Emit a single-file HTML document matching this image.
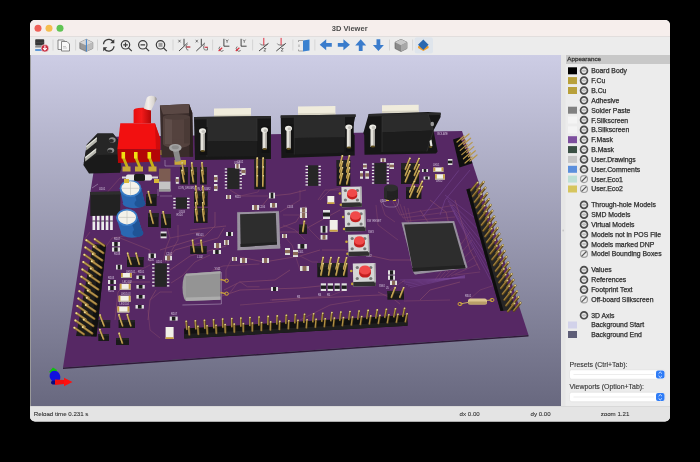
<!DOCTYPE html>
<html><head><meta charset="utf-8">
<style>
html,body{margin:0;padding:0;background:#000;width:700px;height:462px;overflow:hidden}
svg{display:block;will-change:transform}
text{font-family:"Liberation Sans",sans-serif}
.pt{font-size:6.85px;fill:#2e2e2e;stroke:#2e2e2e;stroke-width:0.25px}
.st{font-size:6.15px;fill:#333;stroke:#333;stroke-width:0.1px}
.pl{font-size:6.95px;fill:#333;stroke:#333;stroke-width:0.12px}
</style></head><body>
<svg width="700" height="462" viewBox="0 0 700 462">
<defs>
<linearGradient id="bg" x1="0" y1="0" x2="0" y2="1">
<stop offset="0" stop-color="#cdcde5"/>
<stop offset="1" stop-color="#68687f"/>
</linearGradient>
<clipPath id="win"><rect x="30" y="20" width="640" height="401.5" rx="5"/></clipPath>
<clipPath id="vp"><rect x="31" y="55" width="530" height="351"/></clipPath>
<g id="eye">
<circle r="3.45" fill="#e8e8e8" stroke="#4c4c4c" stroke-width="1.7"/>
<path d="M-2.5,0 Q0,-2.3 2.5,0 Q0,2.3 -2.5,0Z" fill="#bdbdbd"/>
</g>
<g id="off">
<circle r="3.5" fill="#ececec" stroke="#a0a0a0" stroke-width="1.2"/>
<path d="M-2.4,2.4 L2.4,-2.4" stroke="#555" stroke-width="1.2"/>
</g>
</defs>
<rect width="700" height="462" fill="#000"/>
<g clip-path="url(#win)">
<rect x="30" y="20" width="640" height="402" fill="#ececec"/>
<rect x="30" y="20" width="640" height="16" fill="#f6eeec"/>
<rect x="30" y="36" width="640" height="19" fill="#ececec"/>
<rect x="30" y="36" width="640" height="0.6" fill="#dcd6d4"/>
<rect x="31" y="55" width="530" height="351" fill="url(#bg)"/>
<rect x="30" y="55" width="1" height="351" fill="#9a9a9a"/>
<rect x="561" y="55" width="4.5" height="351" fill="#e6e6e6"/><circle cx="563.2" cy="230.5" r="0.9" fill="#c8c8c8"/>
<rect x="566" y="55" width="104" height="9" fill="#c8c8c8"/>
<rect x="30" y="406" width="640" height="16" fill="#e4e4e4"/>
<rect x="30" y="406" width="640" height="0.6" fill="#d0d0d0"/>
</g>
<g clip-path="url(#vp)">
<polygon points="99.0,137.0 462.0,131.0 528.5,335.0 63.0,367.5" fill="#562864" />
<polygon points="63.0,367.5 528.5,335.0 528.5,336.5 63.0,369.0" fill="#2e1a38" />
<polygon points="97.5,133.4 113.0,133.4 117.9,139.7 121.4,167.9 120.0,172.8 89.0,173.5 83.4,165.0 86.9,144.6" fill="#1a1a1a" />
<polygon points="97.5,133.4 113.0,133.4 117.9,139.7 119.0,154.5 97.0,155.0 95.5,140.0" fill="#262626" />
<polygon points="86.9,144.6 97.5,133.4 95.5,140.0 97.0,155.0 83.8,163.0" fill="#222222" />
<polygon points="86.2,146.0 96.8,137.3 96.8,141.8 86.2,150.5" fill="#b8b8b0" />
<polygon points="85.2,157.0 96.2,148.2 96.2,152.7 85.2,161.5" fill="#b8b8b0" />
<polygon points="86.2,146.0 96.8,137.3 96.8,138.8 86.2,147.5" fill="#e4e4dc" />
<polygon points="85.2,157.0 96.2,148.2 96.2,149.7 85.2,158.5" fill="#e4e4dc" />
<ellipse cx="112.3" cy="139.9" rx="3.4" ry="2.6" fill="#8e8e8e" />
<ellipse cx="110.8" cy="150.3" rx="3.4" ry="2.6" fill="#8e8e8e" />
<ellipse cx="111.3" cy="140.8" rx="2.6" ry="1.7" fill="#2a2a2a" />
<ellipse cx="109.8" cy="151.2" rx="2.6" ry="1.7" fill="#2a2a2a" />
<rect x="174.5" y="160.0" width="11.5" height="4.8" fill="#c8a838" />
<rect x="160.5" y="150.0" width="6.0" height="5.0" fill="#c8a838" />
<polygon points="159.9,105.6 189.0,103.9 192.3,112.9 193.1,156.7 161.5,157.5" fill="#3a2c2a" />
<polygon points="159.9,105.6 189.0,103.9 192.3,112.9 163.0,114.5" fill="#5a4844" />
<polygon points="189.0,103.9 192.3,112.9 193.1,156.7 189.5,156.8" fill="#2a201e" />
<rect x="163.0" y="117.0" width="27.0" height="26.5" fill="#54423e" />
<ellipse cx="176.5" cy="143.5" rx="13.5" ry="4.5" fill="#54423e" />
<rect x="165.0" y="117.0" width="7.0" height="27.0" fill="#5f4d49" />
<rect x="184.0" y="117.0" width="6.0" height="26.5" fill="#4a3a36" />
<ellipse cx="176.5" cy="117.0" rx="13.5" ry="2.8" fill="#4e3e3a" />
<polygon points="172.8,150.0 178.5,149.0 181.0,161.0 175.5,162.0" fill="#8a8a8a" />
<ellipse cx="175.3" cy="147.8" rx="6.3" ry="3.9" fill="#a4a4a4" />
<ellipse cx="175.3" cy="147.2" rx="3.6" ry="2.0" fill="#8c8c8c" />
<polygon points="120.3,123.3 154.9,123.3 160.2,138.5 160.2,149.5 117.4,149.0" fill="#f21010" />
<polygon points="154.9,123.3 160.2,138.5 160.2,149.5 156.0,149.4" fill="#d00c0c" />
<polygon points="117.4,149.0 160.2,149.5 160.2,161.4 118.0,163.0" fill="#b40606" />
<polygon points="122.0,158.0 125.0,158.0 130.0,170.0 127.0,170.0" fill="#c8b010" />
<rect x="121.5" y="152.0" width="3.6" height="6.5" fill="#f2e010" />
<rect x="122.5" y="166.5" width="8.0" height="5.0" fill="#c8a838" />
<polygon points="134.5,158.0 137.5,158.0 142.5,170.0 139.5,170.0" fill="#c8b010" />
<rect x="134.0" y="152.0" width="3.6" height="6.5" fill="#f2e010" />
<rect x="135.0" y="166.5" width="8.0" height="5.0" fill="#c8a838" />
<polygon points="148.0,158.0 151.0,158.0 156.0,170.0 153.0,170.0" fill="#c8b010" />
<rect x="147.5" y="152.0" width="3.6" height="6.5" fill="#f2e010" />
<rect x="148.5" y="166.5" width="8.0" height="5.0" fill="#c8a838" />
<linearGradient id="bush" x1="0" x2="1" y1="0" y2="0"><stop offset="0" stop-color="#e80c0c"/><stop offset="0.45" stop-color="#f41a1a"/><stop offset="1" stop-color="#b00808"/></linearGradient>
<linearGradient id="lev" x1="0" x2="1" y1="0" y2="0"><stop offset="0" stop-color="#ddd8d4"/><stop offset="0.35" stop-color="#f4f0ec"/><stop offset="0.8" stop-color="#d8d4d0"/><stop offset="1" stop-color="#8a8682"/></linearGradient>
<path d="M133.6,123.3 V110.5 Q133.6,107.8 142.3,107.8 Q151,107.8 151,110.5 V123.3 Z" fill="url(#bush)"/>
<path d="M146.2,99.5 Q147,95.6 151.8,95.8 Q156.8,96.4 156.6,99.5 L151.2,110.2 Q147.5,110.5 143.8,108.6 Z" fill="url(#lev)" transform="rotate(0)"/>
<polygon points="214.0,108.6 251.0,108.1 251.0,116.5 214.0,117.0" fill="#f0ecdc" />
<polygon points="214.0,115.0 251.0,114.5 251.0,116.5 214.0,117.0" fill="#d8d4c4" />
<polygon points="194.0,117.0 271.0,116.0 271.0,159.0 195.0,160.0" fill="#171717" />
<polygon points="194.0,117.0 271.0,116.0 271.0,118.5 194.0,119.5" fill="#2a2a2a" />
<polygon points="207.0,118.3 257.0,117.7 257.0,141.0 207.0,141.5" fill="#2b2b2b" />
<polygon points="207.0,141.5 257.0,141.0 257.0,156.2 208.0,156.8" fill="#1d1d1d" />
<path d="M207.0,118.8 V156.8 M257.0,118.2 L257.0,141.0" stroke="#383838" stroke-width="0.6"/>
<rect x="199.9" y="127.0" width="7.5" height="28.0" fill="#121212" />
<rect x="200.5" y="131.0" width="4.2" height="20.0" fill="#e4e2da" />
<rect x="203.3" y="131.0" width="1.4" height="20.0" fill="#a8a6a0" />
<ellipse cx="202.5" cy="131.0" rx="3.5" ry="2.7" fill="#ecebe4" />
<ellipse cx="203.3" cy="131.4" rx="1.8" ry="1.5" fill="#c4c2bc" />
<ellipse cx="202.7" cy="151.0" rx="2.3" ry="1.1" fill="#5c4c1c" />
<rect x="261.9" y="126.0" width="7.5" height="27.0" fill="#121212" />
<rect x="262.5" y="130.0" width="4.2" height="19.0" fill="#e4e2da" />
<rect x="265.3" y="130.0" width="1.4" height="19.0" fill="#a8a6a0" />
<ellipse cx="264.5" cy="130.0" rx="3.5" ry="2.7" fill="#ecebe4" />
<ellipse cx="265.3" cy="130.4" rx="1.8" ry="1.5" fill="#c4c2bc" />
<ellipse cx="264.7" cy="149.0" rx="2.3" ry="1.1" fill="#5c4c1c" />
<polygon points="298.0,106.6 335.4,106.1 335.4,114.8 298.0,115.3" fill="#f0ecdc" />
<polygon points="298.0,113.3 335.4,112.8 335.4,114.8 298.0,115.3" fill="#d8d4c4" />
<polygon points="280.7,115.6 355.7,114.5 351.8,133.0 354.7,135.0 354.7,155.4 281.4,158.0" fill="#171717" />
<polygon points="280.7,115.6 355.7,114.5 355.7,117.0 280.7,118.1" fill="#2a2a2a" />
<polygon points="294.3,116.9 344.4,116.2 344.4,137.4 294.3,137.9" fill="#2b2b2b" />
<polygon points="294.3,137.9 344.4,137.4 344.4,152.8 295.3,154.5" fill="#1d1d1d" />
<path d="M294.3,117.4 V154.5 M344.4,116.7 L344.4,137.4" stroke="#383838" stroke-width="0.6"/>
<rect x="285.9" y="124.4" width="7.5" height="28.4" fill="#121212" />
<rect x="286.5" y="128.4" width="4.2" height="20.4" fill="#e4e2da" />
<rect x="289.3" y="128.4" width="1.4" height="20.4" fill="#a8a6a0" />
<ellipse cx="288.5" cy="128.4" rx="3.5" ry="2.7" fill="#ecebe4" />
<ellipse cx="289.3" cy="128.8" rx="1.8" ry="1.5" fill="#c4c2bc" />
<ellipse cx="288.7" cy="148.8" rx="2.3" ry="1.1" fill="#5c4c1c" />
<rect x="346.2" y="123.1" width="7.5" height="28.4" fill="#121212" />
<rect x="346.8" y="127.1" width="4.2" height="20.4" fill="#e4e2da" />
<rect x="349.6" y="127.1" width="1.4" height="20.4" fill="#a8a6a0" />
<ellipse cx="348.8" cy="127.1" rx="3.5" ry="2.7" fill="#ecebe4" />
<ellipse cx="349.6" cy="127.5" rx="1.8" ry="1.5" fill="#c4c2bc" />
<ellipse cx="349.0" cy="147.5" rx="2.3" ry="1.1" fill="#5c4c1c" />
<polygon points="382.0,105.3 418.7,104.8 418.7,112.6 382.0,113.1" fill="#f0ecdc" />
<polygon points="382.0,111.0 418.7,110.5 418.7,112.6 382.0,113.1" fill="#d8d4c4" />
<polygon points="368.7,114.0 428.0,112.0 440.6,112.7 440.6,117.0 433.5,130.6 437.6,151.4 436.0,153.4 364.5,154.8 364.2,135.0 363.3,133.0" fill="#161616" />
<polygon points="368.7,114.0 440.6,112.7 440.6,115.0 368.7,116.5" fill="#2a2a2a" />
<polygon points="382.0,116.0 428.0,114.0 433.5,130.6 382.0,132.6" fill="#2b2b2b" />
<polygon points="382.0,132.6 433.5,130.6 426.9,151.4 382.0,152.0" fill="#1c1c1c" />
<path d="M382,116.5 V152 M428,114 L433.5,130.6 L426.9,151.4" stroke="#3a3a3a" stroke-width="0.6" fill="none"/>
<rect x="370.5" y="127.0" width="4.2" height="20.0" fill="#e4e2da" />
<rect x="373.3" y="127.0" width="1.4" height="20.0" fill="#a8a6a0" />
<ellipse cx="372.7" cy="127.1" rx="3.5" ry="2.7" fill="#ecebe4" />
<ellipse cx="373.5" cy="127.5" rx="1.8" ry="1.5" fill="#c4c2bc" />
<ellipse cx="372.9" cy="146.5" rx="2.3" ry="1.1" fill="#5c4c1c" />
<ellipse cx="432.3" cy="124.0" rx="1.8" ry="2.2" fill="#9a9a9a" />
<polygon points="429.5,141.0 431.5,139.5 432.5,146.0 430.5,147.0" fill="#e8e8e0" />
<ellipse cx="430.7" cy="147.0" rx="1.5" ry="0.9" fill="#6a5a20" />
<path d="M160,250 L205,236 L215,226 L215,212" stroke="#82486a" stroke-width="0.7" fill="none" opacity="1"/>
<path d="M165,262 L175,250 L218,238 L224,228" stroke="#82486a" stroke-width="0.7" fill="none" opacity="1"/>
<path d="M170,270 L190,256 L226,246" stroke="#82486a" stroke-width="0.7" fill="none" opacity="1"/>
<path d="M148,320 L150,300 L156,290" stroke="#82486a" stroke-width="0.7" fill="none" opacity="1"/>
<path d="M115,320 L118,292 L128,282 L150,282" stroke="#82486a" stroke-width="0.7" fill="none" opacity="1"/>
<path d="M224,290 L240,282 L275,280 L290,270" stroke="#82486a" stroke-width="0.7" fill="none" opacity="1"/>
<path d="M222,296 L240,290 L300,288 L320,286" stroke="#82486a" stroke-width="0.7" fill="none" opacity="1"/>
<path d="M240,257 L264,262 L300,256 L320,250" stroke="#82486a" stroke-width="0.7" fill="none" opacity="1"/>
<path d="M280,232 L300,232 L318,222 L340,210" stroke="#82486a" stroke-width="0.7" fill="none" opacity="1"/>
<path d="M280,228 L296,222 L306,206" stroke="#82486a" stroke-width="0.7" fill="none" opacity="1"/>
<path d="M262,206 L270,196 L290,194 L306,190" stroke="#82486a" stroke-width="0.7" fill="none" opacity="1"/>
<path d="M190,230 L226,226" stroke="#82486a" stroke-width="0.7" fill="none" opacity="1"/>
<path d="M322,250 L345,250 L390,260 L420,260" stroke="#82486a" stroke-width="0.7" fill="none" opacity="1"/>
<path d="M378,292 L395,300 L400,304" stroke="#82486a" stroke-width="0.7" fill="none" opacity="1"/>
<path d="M272,300 L380,295 L390,295" stroke="#82486a" stroke-width="0.7" fill="none" opacity="1"/>
<path d="M420,300 L430,290 L460,282" stroke="#82486a" stroke-width="0.7" fill="none" opacity="1"/>
<path d="M455,200 L470,250 L480,270" stroke="#82486a" stroke-width="0.7" fill="none" opacity="1"/>
<path d="M430,200 L446,212 L455,250" stroke="#82486a" stroke-width="0.7" fill="none" opacity="1"/>
<path d="M420,210 L440,240 L448,272" stroke="#82486a" stroke-width="0.7" fill="none" opacity="1"/>
<path d="M435,280 L470,232" stroke="#82486a" stroke-width="0.5" fill="none" opacity="1"/>
<path d="M439,279 L472,240" stroke="#82486a" stroke-width="0.5" fill="none" opacity="1"/>
<path d="M443,278 L474,248" stroke="#82486a" stroke-width="0.5" fill="none" opacity="1"/>
<path d="M447,277 L476,256" stroke="#82486a" stroke-width="0.5" fill="none" opacity="1"/>
<path d="M451,276 L478,264" stroke="#82486a" stroke-width="0.5" fill="none" opacity="1"/>
<path d="M455,275 L480,272" stroke="#82486a" stroke-width="0.5" fill="none" opacity="1"/>
<path d="M392,200 L400,215 L455,205" stroke="#82486a" stroke-width="0.5" fill="none" opacity="1"/>
<path d="M396,202 L403,218 L455,211" stroke="#82486a" stroke-width="0.5" fill="none" opacity="1"/>
<path d="M400,204 L406,221 L455,217" stroke="#82486a" stroke-width="0.5" fill="none" opacity="1"/>
<path d="M404,206 L409,224 L455,223" stroke="#82486a" stroke-width="0.5" fill="none" opacity="1"/>
<path d="M408,208 L412,227 L455,229" stroke="#82486a" stroke-width="0.5" fill="none" opacity="1"/>
<path d="M104,196 L120,178 L160,176" stroke="#82486a" stroke-width="0.6" fill="none" opacity="1"/>
<path d="M90,232 L84,240" stroke="#82486a" stroke-width="0.6" fill="none" opacity="1"/>
<path d="M120,238 L150,250 L150,262" stroke="#82486a" stroke-width="0.6" fill="none" opacity="1"/>
<path d="M165,220 L170,238 L200,232" stroke="#82486a" stroke-width="0.6" fill="none" opacity="1"/>
<path d="M230,190 L240,196 L268,196" stroke="#82486a" stroke-width="0.6" fill="none" opacity="1"/>
<path d="M340,190 L325,190 L318,200" stroke="#82486a" stroke-width="0.6" fill="none" opacity="1"/>
<path d="M300,320 L330,305 L360,300" stroke="#82486a" stroke-width="0.6" fill="none" opacity="1"/>
<path d="M240,305 L300,300" stroke="#82486a" stroke-width="0.6" fill="none" opacity="1"/>
<path d="M167.7,262.5 L172,250 L178,240 L178,225" stroke="#82486a" stroke-width="0.6" fill="none" opacity="1"/>
<path d="M163,262 L166,248 L170,238" stroke="#82486a" stroke-width="0.6" fill="none" opacity="1"/>
<path d="M171,283 L182,276 L195,262 L210,255" stroke="#82486a" stroke-width="0.6" fill="none" opacity="1"/>
<path d="M212.7,270.3 L223,266 L259.5,264" stroke="#82486a" stroke-width="0.6" fill="none" opacity="1"/>
<path d="M239.6,281.6 L247.4,286.8 L259.5,286.8" stroke="#82486a" stroke-width="0.6" fill="none" opacity="1"/>
<path d="M230,292.8 L237,283.3" stroke="#82486a" stroke-width="0.6" fill="none" opacity="1"/>
<path d="M150,300 L160,292 L172,292" stroke="#82486a" stroke-width="0.6" fill="none" opacity="1"/>
<path d="M128,278 L140,270 L150,265" stroke="#82486a" stroke-width="0.5" fill="none" opacity="1"/>
<path d="M148,310 L150,330 L160,338" stroke="#82486a" stroke-width="0.5" fill="none" opacity="1"/>
<path d="M105,248 L112,238 L125,236" stroke="#82486a" stroke-width="0.5" fill="none" opacity="1"/>
<path d="M240,196 L258,192 L264,180" stroke="#82486a" stroke-width="0.5" fill="none" opacity="1"/>
<path d="M300,190 L300,200 L290,206 L280,212" stroke="#82486a" stroke-width="0.5" fill="none" opacity="1"/>
<path d="M320,200 L330,190 L340,188" stroke="#82486a" stroke-width="0.5" fill="none" opacity="1"/>
<path d="M283,215 L300,215 L310,230 L320,240" stroke="#82486a" stroke-width="0.5" fill="none" opacity="1"/>
<path d="M283,225 L295,230 L305,240" stroke="#82486a" stroke-width="0.5" fill="none" opacity="1"/>
<path d="M283,235 L292,245 L300,270" stroke="#82486a" stroke-width="0.5" fill="none" opacity="1"/>
<path d="M232,258 L226,270 L226,280" stroke="#82486a" stroke-width="0.5" fill="none" opacity="1"/>
<path d="M270,300 L330,296 L345,290" stroke="#82486a" stroke-width="0.5" fill="none" opacity="1"/>
<path d="M404,301 L450,300" stroke="#82486a" stroke-width="0.5" fill="none" opacity="1"/>
<path d="M445.0,195 L475.0,218" stroke="#7a4a9a" stroke-width="0.45" fill="none" opacity="1"/>
<path d="M446.5,198 L478.5,230" stroke="#7a4a9a" stroke-width="0.45" fill="none" opacity="1"/>
<path d="M448.0,201 L482.0,242" stroke="#7a4a9a" stroke-width="0.45" fill="none" opacity="1"/>
<path d="M449.5,204 L485.5,254" stroke="#7a4a9a" stroke-width="0.45" fill="none" opacity="1"/>
<path d="M451.0,207 L489.0,266" stroke="#7a4a9a" stroke-width="0.45" fill="none" opacity="1"/>
<path d="M452.5,210 L492.5,278" stroke="#7a4a9a" stroke-width="0.45" fill="none" opacity="1"/>
<path d="M454.0,213 L496.0,290" stroke="#7a4a9a" stroke-width="0.45" fill="none" opacity="1"/>
<path d="M400,280.0 L465,278.0" stroke="#7a4a9a" stroke-width="0.45" fill="none" opacity="1"/>
<path d="M402,281.5 L465,277.5" stroke="#7a4a9a" stroke-width="0.45" fill="none" opacity="1"/>
<path d="M404,283.0 L465,277.0" stroke="#7a4a9a" stroke-width="0.45" fill="none" opacity="1"/>
<path d="M406,284.5 L465,276.5" stroke="#7a4a9a" stroke-width="0.45" fill="none" opacity="1"/>
<path d="M408,286.0 L465,276.0" stroke="#7a4a9a" stroke-width="0.45" fill="none" opacity="1"/>
<path d="M410,287.5 L465,275.5" stroke="#7a4a9a" stroke-width="0.45" fill="none" opacity="1"/>
<path d="M458.8,170.4 L422.5,217" stroke="#7a4a9a" stroke-width="0.5" fill="none" opacity="1"/>
<path d="M470,170 L445,200 L440,215" stroke="#7a4a9a" stroke-width="0.5" fill="none" opacity="1"/>
<path d="M380,200 L385,215 L395,222" stroke="#82486a" stroke-width="0.5" fill="none" opacity="1"/>
<path d="M376,205 L378,225 L398,240" stroke="#82486a" stroke-width="0.5" fill="none" opacity="1"/>
<path d="M300,256 L312,262 L318,262" stroke="#82486a" stroke-width="0.5" fill="none" opacity="1"/>
<path d="M405,280 L390,290" stroke="#82486a" stroke-width="0.5" fill="none" opacity="1"/>
<path d="M470,299 L480,290 L495,285" stroke="#82486a" stroke-width="0.5" fill="none" opacity="1"/>
<text x="178.0" y="189.0" style="font-size:2.6px;fill:#e6dcef;opacity:0.85">CON_DRUM1</text>
<text x="194.0" y="189.5" style="font-size:2.6px;fill:#e6dcef;opacity:0.85">CON_DRUM2</text>
<text x="234.0" y="164.0" style="font-size:2.6px;fill:#e6dcef;opacity:0.85">U102</text>
<text x="235.0" y="197.5" style="font-size:2.6px;fill:#e6dcef;opacity:0.85">R111</text>
<text x="178.8" y="213.0" style="font-size:2.6px;fill:#e6dcef;opacity:0.85">U103</text>
<text x="176.5" y="216.0" style="font-size:2.6px;fill:#e6dcef;opacity:0.85">R104</text>
<text x="237.0" y="163.0" style="font-size:2.6px;fill:#e6dcef;opacity:0.85">C102</text>
<text x="287.0" y="208.0" style="font-size:2.6px;fill:#e6dcef;opacity:0.85">C103</text>
<text x="259.0" y="208.0" style="font-size:2.6px;fill:#e6dcef;opacity:0.85">C106</text>
<text x="300.0" y="213.0" style="font-size:2.6px;fill:#e6dcef;opacity:0.85">R109</text>
<text x="297.7" y="253.0" style="font-size:2.6px;fill:#e6dcef;opacity:0.85">L101</text>
<text x="367.0" y="222.0" style="font-size:2.6px;fill:#e6dcef;opacity:0.85">SW_RESET</text>
<text x="126.0" y="272.5" style="font-size:2.6px;fill:#e6dcef;opacity:0.85">LED101</text>
<text x="138.0" y="272.5" style="font-size:2.6px;fill:#e6dcef;opacity:0.85">R201</text>
<text x="122.4" y="283.0" style="font-size:2.6px;fill:#e6dcef;opacity:0.85">LED102</text>
<text x="121.0" y="294.5" style="font-size:2.6px;fill:#e6dcef;opacity:0.85">LED103</text>
<text x="119.5" y="305.0" style="font-size:2.6px;fill:#e6dcef;opacity:0.85">LED104</text>
<text x="156.0" y="262.5" style="font-size:2.6px;fill:#e6dcef;opacity:0.85">U201</text>
<text x="214.5" y="270.0" style="font-size:2.6px;fill:#e6dcef;opacity:0.85">Y101</text>
<text x="171.0" y="315.0" style="font-size:2.6px;fill:#e6dcef;opacity:0.85">R207</text>
<text x="197.0" y="258.0" style="font-size:2.6px;fill:#e6dcef;opacity:0.85">L102</text>
<text x="196.0" y="236.0" style="font-size:2.6px;fill:#e6dcef;opacity:0.85">FB101</text>
<text x="147.8" y="261.0" style="font-size:2.6px;fill:#e6dcef;opacity:0.85">R206</text>
<text x="166.0" y="255.0" style="font-size:2.6px;fill:#e6dcef;opacity:0.85">C202</text>
<text x="99.0" y="189.5" style="font-size:2.6px;fill:#e6dcef;opacity:0.85">U101</text>
<text x="108.0" y="279.0" style="font-size:2.6px;fill:#e6dcef;opacity:0.85">R203</text>
<text x="108.0" y="292.0" style="font-size:2.6px;fill:#e6dcef;opacity:0.85">R202</text>
<text x="114.0" y="239.5" style="font-size:2.6px;fill:#e6dcef;opacity:0.85">R107</text>
<text x="114.0" y="254.5" style="font-size:2.6px;fill:#e6dcef;opacity:0.85">R108</text>
<text x="366.0" y="257.0" style="font-size:2.6px;fill:#e6dcef;opacity:0.85">SW2</text>
<text x="368.0" y="233.0" style="font-size:2.6px;fill:#e6dcef;opacity:0.85">SW3</text>
<text x="379.0" y="287.0" style="font-size:2.6px;fill:#e6dcef;opacity:0.85">SW4</text>
<text x="380.0" y="202.0" style="font-size:2.6px;fill:#e6dcef;opacity:0.85">Q101</text>
<text x="433.0" y="165.5" style="font-size:2.6px;fill:#e6dcef;opacity:0.85">LED1</text>
<text x="436.0" y="182.0" style="font-size:2.6px;fill:#e6dcef;opacity:0.85">LED2</text>
<text x="465.0" y="297.0" style="font-size:2.6px;fill:#e6dcef;opacity:0.85">R301</text>
<text x="297.0" y="298.0" style="font-size:2.6px;fill:#e6dcef;opacity:0.85">R3</text>
<text x="318.0" y="296.0" style="font-size:2.6px;fill:#e6dcef;opacity:0.85">R4</text>
<text x="327.0" y="296.0" style="font-size:2.6px;fill:#e6dcef;opacity:0.85">R5</text>
<text x="386.0" y="289.0" style="font-size:2.6px;fill:#e6dcef;opacity:0.85">J5</text>
<text x="437.0" y="134.5" style="font-size:2.6px;fill:#e6dcef;opacity:0.85">ISOLATE</text>
<path d="M158,196 L158,189 M132,196 H125" stroke="#d8d0e0" stroke-width="0.4" fill="none" opacity="0.8"/>
<path d="M165,160 V166 H186" stroke="#d8d0e0" stroke-width="0.5" fill="none" opacity="0.8"/>
<path d="M160,196 L172,196" stroke="#d8d0e0" stroke-width="0.4" fill="none" opacity="0.8"/>
<polygon points="237.2,212.3 279.0,211.2 280.2,248.5 237.5,250.3" fill="#8c8494" />
<path d="M240.5,214.3 L237.7,212.3 M241.2,247.0 L238.0,250.3 M240.1,214.7 L237.2,212.8 M275.8,213.5 L279.0,211.7 M241.4,214.3 L238.8,212.3 M242.1,246.9 L239.1,250.2 M240.1,215.5 L237.2,213.7 M275.8,214.3 L279.0,212.6 M242.3,214.2 L239.8,212.2 M243.0,246.8 L240.2,250.2 M240.1,216.3 L237.2,214.7 M275.9,215.1 L279.1,213.5 M243.2,214.2 L240.9,212.2 M243.9,246.8 L241.2,250.1 M240.2,217.2 L237.2,215.6 M275.9,215.9 L279.1,214.5 M244.1,214.2 L241.9,212.2 M244.8,246.7 L242.3,250.1 M240.2,218.0 L237.2,216.6 M275.9,216.6 L279.1,215.4 M245.0,214.1 L242.9,212.1 M245.7,246.7 L243.4,250.1 M240.2,218.8 L237.2,217.5 M276.0,217.4 L279.2,216.3 M245.9,214.1 L244.0,212.1 M246.6,246.6 L244.4,250.0 M240.2,219.6 L237.2,218.5 M276.0,218.2 L279.2,217.3 M246.8,214.1 L245.0,212.1 M247.5,246.6 L245.5,250.0 M240.2,220.4 L237.3,219.4 M276.0,219.0 L279.2,218.2 M247.7,214.0 L246.1,212.1 M248.4,246.5 L246.6,249.9 M240.2,221.2 L237.3,220.4 M276.1,219.8 L279.3,219.1 M248.6,214.0 L247.1,212.0 M249.3,246.4 L247.6,249.9 M240.2,222.1 L237.3,221.3 M276.1,220.6 L279.3,220.1 M249.5,214.0 L248.2,212.0 M250.2,246.4 L248.7,249.8 M240.3,222.9 L237.3,222.3 M276.1,221.4 L279.3,221.0 M250.4,214.0 L249.2,212.0 M251.1,246.3 L249.8,249.8 M240.3,223.7 L237.3,223.2 M276.1,222.2 L279.3,221.9 M251.3,213.9 L250.3,212.0 M252.0,246.2 L250.8,249.7 M240.3,224.5 L237.3,224.2 M276.2,222.9 L279.4,222.9 M252.1,213.9 L251.3,211.9 M253.0,246.2 L251.9,249.7 M240.3,225.3 L237.3,225.1 M276.2,223.7 L279.4,223.8 M253.0,213.9 L252.4,211.9 M253.9,246.1 L253.0,249.6 M240.3,226.2 L237.3,226.1 M276.2,224.5 L279.4,224.7 M253.9,213.8 L253.4,211.9 M254.8,246.1 L254.0,249.6 M240.3,227.0 L237.3,227.0 M276.3,225.3 L279.5,225.7 M254.8,213.8 L254.4,211.8 M255.7,246.0 L255.1,249.6 M240.3,227.8 L237.3,228.0 M276.3,226.1 L279.5,226.6 M255.7,213.8 L255.5,211.8 M256.6,245.9 L256.2,249.5 M240.4,228.6 L237.3,228.9 M276.3,226.9 L279.5,227.5 M256.6,213.7 L256.5,211.8 M257.5,245.9 L257.2,249.5 M240.4,229.4 L237.3,229.9 M276.4,227.7 L279.6,228.5 M257.5,213.7 L257.6,211.8 M258.4,245.8 L258.3,249.4 M240.4,230.2 L237.3,230.8 M276.4,228.5 L279.6,229.4 M258.4,213.7 L258.6,211.7 M259.3,245.8 L259.4,249.4 M240.4,231.1 L237.4,231.8 M276.4,229.2 L279.6,230.3 M259.3,213.7 L259.7,211.7 M260.2,245.7 L260.5,249.3 M240.4,231.9 L237.4,232.7 M276.4,230.0 L279.6,231.2 M260.2,213.6 L260.7,211.7 M261.1,245.7 L261.5,249.3 M240.4,232.7 L237.4,233.7 M276.5,230.8 L279.7,232.2 M261.1,213.6 L261.8,211.7 M262.0,245.6 L262.6,249.2 M240.5,233.5 L237.4,234.6 M276.5,231.6 L279.7,233.1 M262.0,213.6 L262.8,211.6 M262.9,245.5 L263.7,249.2 M240.5,234.3 L237.4,235.6 M276.5,232.4 L279.7,234.0 M262.9,213.5 L263.8,211.6 M263.8,245.5 L264.7,249.2 M240.5,235.1 L237.4,236.5 M276.6,233.2 L279.8,235.0 M263.8,213.5 L264.9,211.6 M264.7,245.4 L265.8,249.1 M240.5,236.0 L237.4,237.5 M276.6,234.0 L279.8,235.9 M264.6,213.5 L265.9,211.5 M265.7,245.3 L266.9,249.1 M240.5,236.8 L237.4,238.4 M276.6,234.8 L279.8,236.8 M265.5,213.4 L267.0,211.5 M266.6,245.3 L267.9,249.0 M240.5,237.6 L237.4,239.4 M276.7,235.5 L279.9,237.8 M266.4,213.4 L268.0,211.5 M267.5,245.2 L269.0,249.0 M240.5,238.4 L237.4,240.3 M276.7,236.3 L279.9,238.7 M267.3,213.4 L269.1,211.5 M268.4,245.2 L270.1,248.9 M240.6,239.2 L237.4,241.3 M276.7,237.1 L279.9,239.6 M268.2,213.4 L270.1,211.4 M269.3,245.1 L271.1,248.9 M240.6,240.1 L237.4,242.2 M276.7,237.9 L279.9,240.6 M269.1,213.3 L271.2,211.4 M270.2,245.0 L272.2,248.8 M240.6,240.9 L237.4,243.2 M276.8,238.7 L280.0,241.5 M270.0,213.3 L272.2,211.4 M271.1,245.0 L273.3,248.8 M240.6,241.7 L237.5,244.1 M276.8,239.5 L280.0,242.4 M270.9,213.3 L273.3,211.4 M272.0,244.9 L274.3,248.7 M240.6,242.5 L237.5,245.1 M276.8,240.3 L280.0,243.4 M271.8,213.2 L274.3,211.3 M272.9,244.9 L275.4,248.7 M240.6,243.3 L237.5,246.0 M276.9,241.1 L280.1,244.3 M272.7,213.2 L275.3,211.3 M273.8,244.8 L276.5,248.7 M240.6,244.1 L237.5,247.0 M276.9,241.8 L280.1,245.2 M273.6,213.2 L276.4,211.3 M274.7,244.8 L277.5,248.6 M240.7,245.0 L237.5,247.9 M276.9,242.6 L280.1,246.2 M274.5,213.1 L277.4,211.2 M275.6,244.7 L278.6,248.6 M240.7,245.8 L237.5,248.9 M277.0,243.4 L280.2,247.1 M275.4,213.1 L278.5,211.2 M276.5,244.6 L279.7,248.5 M240.7,246.6 L237.5,249.8 M277.0,244.2 L280.2,248.0" stroke="#aaa6ae" stroke-width="0.45"/>
<polygon points="240.1,214.3 275.8,213.1 277.0,244.6 240.7,247.0" fill="#2d2d2d" />
<polygon points="240.5,244.0 277.0,242.0 277.0,244.6 240.7,247.0" fill="#222" />
<polygon points="401.5,222.5 454.0,221.0 467.5,267.5 414.8,274.5" fill="#8c8494" />
<path d="M404.6,224.4 L402.0,222.5 M413.7,271.4 L415.3,274.4 M404.2,224.9 L401.6,223.0 M452.7,223.4 L454.1,221.5 M405.6,224.4 L403.1,222.5 M414.8,271.3 L416.4,274.3 M404.4,225.9 L401.9,224.1 M453.0,224.3 L454.4,222.5 M406.6,224.3 L404.2,222.4 M415.9,271.2 L417.5,274.1 M404.6,226.8 L402.2,225.2 M453.3,225.3 L454.7,223.4 M407.6,224.3 L405.3,222.4 M417.0,271.2 L418.6,274.0 M404.8,227.8 L402.5,226.3 M453.5,226.2 L455.0,224.4 M408.6,224.3 L406.4,222.4 M418.1,271.1 L419.7,273.8 M405.0,228.8 L402.7,227.4 M453.8,227.2 L455.3,225.4 M409.7,224.2 L407.5,222.3 M419.2,271.0 L420.8,273.7 M405.1,229.8 L403.0,228.5 M454.1,228.1 L455.5,226.3 M410.7,224.2 L408.6,222.3 M420.3,271.0 L421.9,273.6 M405.3,230.8 L403.3,229.5 M454.3,229.0 L455.8,227.3 M411.7,224.2 L409.7,222.3 M421.4,270.9 L423.0,273.4 M405.5,231.7 L403.6,230.6 M454.6,230.0 L456.1,228.3 M412.7,224.1 L410.8,222.2 M422.5,270.9 L424.1,273.3 M405.7,232.7 L403.9,231.7 M454.9,230.9 L456.4,229.2 M413.7,224.1 L411.9,222.2 M423.6,270.8 L425.2,273.1 M405.9,233.7 L404.1,232.8 M455.2,231.9 L456.7,230.2 M414.7,224.1 L413.0,222.2 M424.6,270.7 L426.3,273.0 M406.1,234.7 L404.4,233.9 M455.4,232.8 L457.0,231.2 M415.7,224.0 L414.1,222.1 M425.7,270.7 L427.4,272.8 M406.3,235.7 L404.7,235.0 M455.7,233.8 L457.2,232.1 M416.7,224.0 L415.2,222.1 M426.8,270.6 L428.5,272.7 M406.5,236.6 L405.0,236.0 M456.0,234.7 L457.5,233.1 M417.7,224.0 L416.3,222.1 M427.9,270.5 L429.6,272.5 M406.7,237.6 L405.2,237.1 M456.2,235.7 L457.8,234.1 M418.8,223.9 L417.4,222.0 M429.0,270.5 L430.7,272.4 M406.8,238.6 L405.5,238.2 M456.5,236.6 L458.1,235.0 M419.8,223.9 L418.5,222.0 M430.1,270.4 L431.8,272.2 M407.0,239.6 L405.8,239.3 M456.8,237.6 L458.4,236.0 M420.8,223.9 L419.5,222.0 M431.2,270.3 L432.9,272.1 M407.2,240.6 L406.1,240.4 M457.0,238.5 L458.6,237.0 M421.8,223.9 L420.6,222.0 M432.3,270.3 L434.0,271.9 M407.4,241.5 L406.3,241.5 M457.3,239.5 L458.9,238.0 M422.8,223.8 L421.7,221.9 M433.4,270.2 L435.1,271.8 M407.6,242.5 L406.6,242.5 M457.6,240.4 L459.2,238.9 M423.8,223.8 L422.8,221.9 M434.4,270.1 L436.2,271.7 M407.8,243.5 L406.9,243.6 M457.8,241.3 L459.5,239.9 M424.8,223.8 L423.9,221.9 M435.5,270.1 L437.3,271.5 M408.0,244.5 L407.2,244.7 M458.1,242.3 L459.8,240.9 M425.8,223.7 L425.0,221.8 M436.6,270.0 L438.4,271.4 M408.2,245.5 L407.5,245.8 M458.4,243.2 L460.0,241.8 M426.8,223.7 L426.1,221.8 M437.7,269.9 L439.5,271.2 M408.4,246.4 L407.7,246.9 M458.6,244.2 L460.3,242.8 M427.8,223.7 L427.2,221.8 M438.8,269.9 L440.6,271.1 M408.6,247.4 L408.0,248.0 M458.9,245.1 L460.6,243.8 M428.9,223.6 L428.3,221.7 M439.9,269.8 L441.7,270.9 M408.7,248.4 L408.3,249.0 M459.2,246.1 L460.9,244.7 M429.9,223.6 L429.4,221.7 M441.0,269.8 L442.8,270.8 M408.9,249.4 L408.6,250.1 M459.5,247.0 L461.2,245.7 M430.9,223.6 L430.5,221.7 M442.1,269.7 L443.9,270.6 M409.1,250.3 L408.8,251.2 M459.7,248.0 L461.5,246.7 M431.9,223.5 L431.6,221.6 M443.2,269.6 L445.0,270.5 M409.3,251.3 L409.1,252.3 M460.0,248.9 L461.7,247.6 M432.9,223.5 L432.7,221.6 M444.3,269.6 L446.1,270.3 M409.5,252.3 L409.4,253.4 M460.3,249.9 L462.0,248.6 M433.9,223.5 L433.8,221.6 M445.3,269.5 L447.2,270.2 M409.7,253.3 L409.7,254.5 M460.5,250.8 L462.3,249.6 M434.9,223.4 L434.9,221.5 M446.4,269.4 L448.3,270.1 M409.9,254.3 L410.0,255.5 M460.8,251.7 L462.6,250.5 M435.9,223.4 L436.0,221.5 M447.5,269.4 L449.4,269.9 M410.1,255.2 L410.2,256.6 M461.1,252.7 L462.9,251.5 M436.9,223.4 L437.0,221.5 M448.6,269.3 L450.5,269.8 M410.3,256.2 L410.5,257.7 M461.3,253.6 L463.1,252.5 M437.9,223.4 L438.1,221.5 M449.7,269.2 L451.6,269.6 M410.5,257.2 L410.8,258.8 M461.6,254.6 L463.4,253.5 M439.0,223.3 L439.2,221.4 M450.8,269.2 L452.7,269.5 M410.6,258.2 L411.1,259.9 M461.9,255.5 L463.7,254.4 M440.0,223.3 L440.3,221.4 M451.9,269.1 L453.8,269.3 M410.8,259.2 L411.3,261.0 M462.1,256.5 L464.0,255.4 M441.0,223.3 L441.4,221.4 M453.0,269.0 L454.9,269.2 M411.0,260.1 L411.6,262.0 M462.4,257.4 L464.3,256.4 M442.0,223.2 L442.5,221.3 M454.1,269.0 L456.0,269.0 M411.2,261.1 L411.9,263.1 M462.7,258.4 L464.5,257.3 M443.0,223.2 L443.6,221.3 M455.1,268.9 L457.1,268.9 M411.4,262.1 L412.2,264.2 M462.9,259.3 L464.8,258.3 M444.0,223.2 L444.7,221.3 M456.2,268.8 L458.2,268.7 M411.6,263.1 L412.4,265.3 M463.2,260.3 L465.1,259.3 M445.0,223.1 L445.8,221.2 M457.3,268.8 L459.3,268.6 M411.8,264.1 L412.7,266.4 M463.5,261.2 L465.4,260.2 M446.0,223.1 L446.9,221.2 M458.4,268.7 L460.4,268.4 M412.0,265.0 L413.0,267.5 M463.8,262.2 L465.7,261.2 M447.0,223.1 L448.0,221.2 M459.5,268.7 L461.5,268.3 M412.2,266.0 L413.3,268.5 M464.0,263.1 L466.0,262.2 M448.1,223.0 L449.1,221.1 M460.6,268.6 L462.6,268.2 M412.3,267.0 L413.6,269.6 M464.3,264.0 L466.2,263.1 M449.1,223.0 L450.2,221.1 M461.7,268.5 L463.7,268.0 M412.5,268.0 L413.8,270.7 M464.6,265.0 L466.5,264.1 M450.1,223.0 L451.3,221.1 M462.8,268.5 L464.8,267.9 M412.7,269.0 L414.1,271.8 M464.8,265.9 L466.8,265.1 M451.1,222.9 L452.4,221.0 M463.9,268.4 L465.9,267.7 M412.9,269.9 L414.4,272.9 M465.1,266.9 L467.1,266.0 M452.1,222.9 L453.5,221.0 M465.0,268.3 L467.0,267.6 M413.1,270.9 L414.7,274.0 M465.4,267.8 L467.4,267.0" stroke="#aaa6ae" stroke-width="0.45"/>
<polygon points="404.1,224.4 452.6,222.9 465.5,268.3 413.2,271.4" fill="#2d2d2d" />
<polygon points="412.0,268.0 465.0,265.0 465.5,268.3 413.2,271.4" fill="#222" />
<path d="M182.4,305 L221.4,304 L221.4,272" stroke="#d8d0e0" stroke-width="0.5" fill="none" opacity="0.8"/>
<ellipse cx="186.5" cy="287.4" rx="4.0" ry="13.6" fill="#9c9c9c" />
<polygon points="186.0,273.8 220.5,271.2 220.5,299.7 186.0,301.0" fill="#949494" />
<polygon points="186.0,273.8 220.5,271.2 220.5,273.5 186.0,276.0" fill="#a8a8a8" />
<polygon points="186.0,297.5 220.5,296.5 220.5,299.7 186.0,301.0" fill="#acacac" />
<path d="M220.5,279.5 L225.5,280.7 M220.5,292.5 L225.5,293.7" stroke="#c8a040" stroke-width="1.3"/>
<ellipse cx="226.6" cy="280.7" rx="1.8" ry="1.6" fill="none" stroke="#d8b030" stroke-width="0.9"/>
<ellipse cx="226.6" cy="293.7" rx="1.8" ry="1.6" fill="none" stroke="#d8b030" stroke-width="0.9"/>
<path d="M92,188 L98,184 M122,188 L120,194" stroke="#d8d0e0" stroke-width="0.5" fill="none" opacity="0.8"/>
<rect x="92.5" y="213.5" width="2.7" height="7.0" fill="#ececec" />
<rect x="92.5" y="222.0" width="2.7" height="8.0" fill="#ececec" />
<rect x="92.5" y="220.5" width="2.7" height="1.5" fill="#9a9a9a" />
<rect x="96.9" y="213.5" width="2.7" height="7.0" fill="#ececec" />
<rect x="96.9" y="222.0" width="2.7" height="8.0" fill="#ececec" />
<rect x="96.9" y="220.5" width="2.7" height="1.5" fill="#9a9a9a" />
<rect x="101.3" y="213.5" width="2.7" height="7.0" fill="#ececec" />
<rect x="101.3" y="222.0" width="2.7" height="8.0" fill="#ececec" />
<rect x="101.3" y="220.5" width="2.7" height="1.5" fill="#9a9a9a" />
<rect x="105.7" y="213.5" width="2.7" height="7.0" fill="#ececec" />
<rect x="105.7" y="222.0" width="2.7" height="8.0" fill="#ececec" />
<rect x="105.7" y="220.5" width="2.7" height="1.5" fill="#9a9a9a" />
<rect x="110.1" y="213.5" width="2.7" height="7.0" fill="#ececec" />
<rect x="110.1" y="222.0" width="2.7" height="8.0" fill="#ececec" />
<rect x="110.1" y="220.5" width="2.7" height="1.5" fill="#9a9a9a" />
<polygon points="90.3,192.0 120.6,191.6 120.0,215.5 90.3,216.0" fill="#222222" />
<polygon points="90.3,192.0 120.6,191.6 120.6,194.5 90.3,195.0" fill="#2e2e2e" />
<polygon points="119.7,188.3 141.3,188.3 144.8,203.5 123.2,203.5" fill="#2a68b2" />
<ellipse cx="134.0" cy="203.5" rx="11.3" ry="4.7" fill="#2a68b2" />
<polygon points="133.2,188.3 141.3,188.3 144.8,203.5 137.2,203.5" fill="#1f5496" />
<ellipse cx="139.9" cy="203.5" rx="5.4" ry="3.9" fill="#1f5496" />
<ellipse cx="130.5" cy="188.3" rx="10.8" ry="8.6" fill="#3a7cc6" />
<ellipse cx="130.5" cy="188.3" rx="9.0" ry="7.0" fill="#f4f2ea" />
<path d="M122.2,188.3 H138.8 M130.5,181.7 V194.9" stroke="#c0c0b8" stroke-width="0.6"/>
<polygon points="116.2,217.4 137.8,217.4 142.8,233.0 121.2,233.0" fill="#2a68b2" />
<ellipse cx="132.0" cy="233.0" rx="11.3" ry="4.7" fill="#2a68b2" />
<polygon points="129.7,217.4 137.8,217.4 142.8,233.0 135.2,233.0" fill="#1f5496" />
<ellipse cx="137.9" cy="233.0" rx="5.4" ry="3.9" fill="#1f5496" />
<ellipse cx="127.0" cy="217.4" rx="10.8" ry="8.6" fill="#3a7cc6" />
<ellipse cx="127.0" cy="217.4" rx="9.0" ry="7.0" fill="#f4f2ea" />
<path d="M118.7,217.4 H135.3 M127.0,210.8 V224.0" stroke="#c0c0b8" stroke-width="0.6"/>
<rect x="122.0" y="176.5" width="36.0" height="2.0" fill="#d8d8d8" />
<rect x="126.0" y="174.5" width="26.0" height="6.0" fill="#e6e6e6" rx="2"/>
<rect x="134.0" y="174.0" width="11.0" height="7.0" fill="#1c1c1c" rx="1.5"/>
<rect x="124.0" y="179.0" width="5.0" height="4.0" fill="#d8b838" />
<rect x="154.0" y="179.0" width="5.0" height="4.0" fill="#d8b838" />
<polygon points="159.0,168.6 170.5,168.6 170.5,181.5 159.0,181.5" fill="#7c5c52" />
<polygon points="159.0,181.5 170.5,181.5 170.5,191.4 159.0,191.4" fill="#c4c4c4" />
<polygon points="159.0,189.0 170.5,189.0 170.5,191.4 159.0,191.4" fill="#9a9a9a" />
<rect x="224.8" y="168.3" width="2.5" height="1.3" fill="#e8e8e8" />
<rect x="239.4" y="168.3" width="2.5" height="1.3" fill="#e8e8e8" />
<rect x="224.8" y="171.5" width="2.5" height="1.3" fill="#e8e8e8" />
<rect x="239.4" y="171.5" width="2.5" height="1.3" fill="#e8e8e8" />
<rect x="224.8" y="174.7" width="2.5" height="1.3" fill="#e8e8e8" />
<rect x="239.4" y="174.7" width="2.5" height="1.3" fill="#e8e8e8" />
<rect x="224.8" y="177.8" width="2.5" height="1.3" fill="#e8e8e8" />
<rect x="239.4" y="177.8" width="2.5" height="1.3" fill="#e8e8e8" />
<rect x="224.8" y="181.0" width="2.5" height="1.3" fill="#e8e8e8" />
<rect x="239.4" y="181.0" width="2.5" height="1.3" fill="#e8e8e8" />
<rect x="224.8" y="184.2" width="2.5" height="1.3" fill="#e8e8e8" />
<rect x="239.4" y="184.2" width="2.5" height="1.3" fill="#e8e8e8" />
<rect x="224.8" y="187.4" width="2.5" height="1.3" fill="#e8e8e8" />
<rect x="239.4" y="187.4" width="2.5" height="1.3" fill="#e8e8e8" />
<rect x="227.3" y="167.9" width="12.1" height="21.1" fill="#262626" />
<rect x="305.5" y="165.7" width="2.5" height="1.3" fill="#e8e8e8" />
<rect x="318.3" y="165.7" width="2.5" height="1.3" fill="#e8e8e8" />
<rect x="305.5" y="168.8" width="2.5" height="1.3" fill="#e8e8e8" />
<rect x="318.3" y="168.8" width="2.5" height="1.3" fill="#e8e8e8" />
<rect x="305.5" y="171.9" width="2.5" height="1.3" fill="#e8e8e8" />
<rect x="318.3" y="171.9" width="2.5" height="1.3" fill="#e8e8e8" />
<rect x="305.5" y="175.0" width="2.5" height="1.3" fill="#e8e8e8" />
<rect x="318.3" y="175.0" width="2.5" height="1.3" fill="#e8e8e8" />
<rect x="305.5" y="178.1" width="2.5" height="1.3" fill="#e8e8e8" />
<rect x="318.3" y="178.1" width="2.5" height="1.3" fill="#e8e8e8" />
<rect x="305.5" y="181.2" width="2.5" height="1.3" fill="#e8e8e8" />
<rect x="318.3" y="181.2" width="2.5" height="1.3" fill="#e8e8e8" />
<rect x="305.5" y="184.3" width="2.5" height="1.3" fill="#e8e8e8" />
<rect x="318.3" y="184.3" width="2.5" height="1.3" fill="#e8e8e8" />
<rect x="308.0" y="165.3" width="10.3" height="20.6" fill="#262626" />
<rect x="371.9" y="163.3" width="2.5" height="1.3" fill="#e8e8e8" />
<rect x="386.5" y="163.3" width="2.5" height="1.3" fill="#e8e8e8" />
<rect x="371.9" y="166.5" width="2.5" height="1.3" fill="#e8e8e8" />
<rect x="386.5" y="166.5" width="2.5" height="1.3" fill="#e8e8e8" />
<rect x="371.9" y="169.7" width="2.5" height="1.3" fill="#e8e8e8" />
<rect x="386.5" y="169.7" width="2.5" height="1.3" fill="#e8e8e8" />
<rect x="371.9" y="172.8" width="2.5" height="1.3" fill="#e8e8e8" />
<rect x="386.5" y="172.8" width="2.5" height="1.3" fill="#e8e8e8" />
<rect x="371.9" y="176.0" width="2.5" height="1.3" fill="#e8e8e8" />
<rect x="386.5" y="176.0" width="2.5" height="1.3" fill="#e8e8e8" />
<rect x="371.9" y="179.2" width="2.5" height="1.3" fill="#e8e8e8" />
<rect x="386.5" y="179.2" width="2.5" height="1.3" fill="#e8e8e8" />
<rect x="371.9" y="182.4" width="2.5" height="1.3" fill="#e8e8e8" />
<rect x="386.5" y="182.4" width="2.5" height="1.3" fill="#e8e8e8" />
<rect x="374.4" y="162.9" width="12.1" height="21.1" fill="#262626" />
<rect x="152.2" y="263.8" width="2.5" height="1.3" fill="#e8e8e8" />
<rect x="166.8" y="263.8" width="2.5" height="1.3" fill="#e8e8e8" />
<rect x="152.2" y="267.4" width="2.5" height="1.3" fill="#e8e8e8" />
<rect x="166.8" y="267.4" width="2.5" height="1.3" fill="#e8e8e8" />
<rect x="152.2" y="270.9" width="2.5" height="1.3" fill="#e8e8e8" />
<rect x="166.8" y="270.9" width="2.5" height="1.3" fill="#e8e8e8" />
<rect x="152.2" y="274.5" width="2.5" height="1.3" fill="#e8e8e8" />
<rect x="166.8" y="274.5" width="2.5" height="1.3" fill="#e8e8e8" />
<rect x="152.2" y="278.1" width="2.5" height="1.3" fill="#e8e8e8" />
<rect x="166.8" y="278.1" width="2.5" height="1.3" fill="#e8e8e8" />
<rect x="152.2" y="281.6" width="2.5" height="1.3" fill="#e8e8e8" />
<rect x="166.8" y="281.6" width="2.5" height="1.3" fill="#e8e8e8" />
<rect x="152.2" y="285.2" width="2.5" height="1.3" fill="#e8e8e8" />
<rect x="166.8" y="285.2" width="2.5" height="1.3" fill="#e8e8e8" />
<rect x="154.7" y="263.4" width="12.1" height="23.4" fill="#262626" />
<rect x="173.3" y="197.8" width="2.5" height="1.3" fill="#e8e8e8" />
<rect x="187.0" y="197.8" width="2.5" height="1.3" fill="#e8e8e8" />
<rect x="173.3" y="200.9" width="2.5" height="1.3" fill="#e8e8e8" />
<rect x="187.0" y="200.9" width="2.5" height="1.3" fill="#e8e8e8" />
<rect x="173.3" y="204.1" width="2.5" height="1.3" fill="#e8e8e8" />
<rect x="187.0" y="204.1" width="2.5" height="1.3" fill="#e8e8e8" />
<rect x="173.3" y="207.2" width="2.5" height="1.3" fill="#e8e8e8" />
<rect x="187.0" y="207.2" width="2.5" height="1.3" fill="#e8e8e8" />
<rect x="175.8" y="197.4" width="11.2" height="11.4" fill="#262626" />
<polygon points="180.3,167.0 187.9,167.0 187.9,184.5 180.3,184.5" fill="#1a1a1a" />
<rect x="180.3" y="167.0" width="7.6" height="5.2" fill="#242424" />
<path d="M184.1,174.4 L182.1,162.9" stroke="#6e5220" stroke-width="1.9" stroke-linecap="round"/>
<path d="M183.9,174.4 L181.9,162.9" stroke="#b89848" stroke-width="1.3" stroke-linecap="round"/>
<path d="M183.7,173.9 L181.7,163.4" stroke="#dcc27a" stroke-width="0.5"/>
<ellipse cx="182.1" cy="162.9" rx="0.9" ry="0.8" fill="#e8d898" />
<path d="M184.1,181.9 L182.1,170.4" stroke="#6e5220" stroke-width="1.9" stroke-linecap="round"/>
<path d="M183.9,181.9 L181.9,170.4" stroke="#b89848" stroke-width="1.3" stroke-linecap="round"/>
<path d="M183.7,181.4 L181.7,170.9" stroke="#dcc27a" stroke-width="0.5"/>
<ellipse cx="182.1" cy="170.4" rx="0.9" ry="0.8" fill="#e8d898" />
<polygon points="190.0,167.0 197.0,167.0 197.0,184.5 190.0,184.5" fill="#1a1a1a" />
<rect x="190.0" y="167.0" width="7.0" height="5.2" fill="#242424" />
<path d="M193.5,174.4 L191.8,162.9" stroke="#6e5220" stroke-width="1.9" stroke-linecap="round"/>
<path d="M193.3,174.4 L191.6,162.9" stroke="#b89848" stroke-width="1.3" stroke-linecap="round"/>
<path d="M193.1,173.9 L191.4,163.4" stroke="#dcc27a" stroke-width="0.5"/>
<ellipse cx="191.8" cy="162.9" rx="0.9" ry="0.8" fill="#e8d898" />
<path d="M193.5,181.9 L191.8,170.3" stroke="#6e5220" stroke-width="1.9" stroke-linecap="round"/>
<path d="M193.3,181.9 L191.6,170.3" stroke="#b89848" stroke-width="1.3" stroke-linecap="round"/>
<path d="M193.1,181.4 L191.4,170.8" stroke="#dcc27a" stroke-width="0.5"/>
<ellipse cx="191.8" cy="170.3" rx="0.9" ry="0.8" fill="#e8d898" />
<polygon points="200.0,167.0 206.8,167.0 206.8,184.5 200.0,184.5" fill="#1a1a1a" />
<rect x="200.0" y="167.0" width="6.8" height="5.2" fill="#242424" />
<path d="M203.4,174.4 L202.0,162.8" stroke="#6e5220" stroke-width="1.9" stroke-linecap="round"/>
<path d="M203.2,174.4 L201.8,162.8" stroke="#b89848" stroke-width="1.3" stroke-linecap="round"/>
<path d="M203.0,173.9 L201.6,163.3" stroke="#dcc27a" stroke-width="0.5"/>
<ellipse cx="202.0" cy="162.8" rx="0.9" ry="0.8" fill="#e8d898" />
<path d="M203.4,181.9 L202.0,170.3" stroke="#6e5220" stroke-width="1.9" stroke-linecap="round"/>
<path d="M203.2,181.9 L201.8,170.3" stroke="#b89848" stroke-width="1.3" stroke-linecap="round"/>
<path d="M203.0,181.4 L201.6,170.8" stroke="#dcc27a" stroke-width="0.5"/>
<ellipse cx="202.0" cy="170.3" rx="0.9" ry="0.8" fill="#e8d898" />
<polygon points="194.0,191.4 207.6,191.4 207.6,206.5 194.0,206.5" fill="#1a1a1a" />
<rect x="194.0" y="191.4" width="13.6" height="4.5" fill="#242424" />
<path d="M197.4,197.8 L195.8,186.2" stroke="#6e5220" stroke-width="1.9" stroke-linecap="round"/>
<path d="M197.2,197.8 L195.6,186.2" stroke="#b89848" stroke-width="1.3" stroke-linecap="round"/>
<path d="M197.0,197.3 L195.4,186.7" stroke="#dcc27a" stroke-width="0.5"/>
<ellipse cx="195.8" cy="186.2" rx="0.9" ry="0.8" fill="#e8d898" />
<path d="M204.2,197.8 L202.8,186.2" stroke="#6e5220" stroke-width="1.9" stroke-linecap="round"/>
<path d="M204.0,197.8 L202.6,186.2" stroke="#b89848" stroke-width="1.3" stroke-linecap="round"/>
<path d="M203.8,197.3 L202.4,186.7" stroke="#dcc27a" stroke-width="0.5"/>
<ellipse cx="202.8" cy="186.2" rx="0.9" ry="0.8" fill="#e8d898" />
<path d="M197.4,204.3 L195.8,192.7" stroke="#6e5220" stroke-width="1.9" stroke-linecap="round"/>
<path d="M197.2,204.3 L195.6,192.7" stroke="#b89848" stroke-width="1.3" stroke-linecap="round"/>
<path d="M197.0,203.8 L195.4,193.2" stroke="#dcc27a" stroke-width="0.5"/>
<ellipse cx="195.8" cy="192.7" rx="0.9" ry="0.8" fill="#e8d898" />
<path d="M204.2,204.3 L202.8,192.6" stroke="#6e5220" stroke-width="1.9" stroke-linecap="round"/>
<path d="M204.0,204.3 L202.6,192.6" stroke="#b89848" stroke-width="1.3" stroke-linecap="round"/>
<path d="M203.8,203.8 L202.4,193.1" stroke="#dcc27a" stroke-width="0.5"/>
<ellipse cx="202.8" cy="192.6" rx="0.9" ry="0.8" fill="#e8d898" />
<polygon points="194.0,208.0 207.6,208.0 207.6,223.0 194.0,223.0" fill="#1a1a1a" />
<rect x="194.0" y="208.0" width="13.6" height="4.5" fill="#242424" />
<path d="M197.4,214.4 L195.8,202.8" stroke="#6e5220" stroke-width="1.9" stroke-linecap="round"/>
<path d="M197.2,214.4 L195.6,202.8" stroke="#b89848" stroke-width="1.3" stroke-linecap="round"/>
<path d="M197.0,213.9 L195.4,203.3" stroke="#dcc27a" stroke-width="0.5"/>
<ellipse cx="195.8" cy="202.8" rx="0.9" ry="0.8" fill="#e8d898" />
<path d="M204.2,214.4 L202.8,202.8" stroke="#6e5220" stroke-width="1.9" stroke-linecap="round"/>
<path d="M204.0,214.4 L202.6,202.8" stroke="#b89848" stroke-width="1.3" stroke-linecap="round"/>
<path d="M203.8,213.9 L202.4,203.3" stroke="#dcc27a" stroke-width="0.5"/>
<ellipse cx="202.8" cy="202.8" rx="0.9" ry="0.8" fill="#e8d898" />
<path d="M197.4,220.8 L195.8,209.2" stroke="#6e5220" stroke-width="1.9" stroke-linecap="round"/>
<path d="M197.2,220.8 L195.6,209.2" stroke="#b89848" stroke-width="1.3" stroke-linecap="round"/>
<path d="M197.0,220.3 L195.4,209.7" stroke="#dcc27a" stroke-width="0.5"/>
<ellipse cx="195.8" cy="209.2" rx="0.9" ry="0.8" fill="#e8d898" />
<path d="M204.2,220.8 L202.8,209.2" stroke="#6e5220" stroke-width="1.9" stroke-linecap="round"/>
<path d="M204.0,220.8 L202.6,209.2" stroke="#b89848" stroke-width="1.3" stroke-linecap="round"/>
<path d="M203.8,220.3 L202.4,209.7" stroke="#dcc27a" stroke-width="0.5"/>
<ellipse cx="202.8" cy="209.2" rx="0.9" ry="0.8" fill="#e8d898" />
<polygon points="254.3,159.6 265.7,159.6 265.7,189.3 254.3,189.3" fill="#1a1a1a" />
<rect x="254.3" y="159.6" width="11.4" height="8.9" fill="#242424" />
<path d="M257.1,168.5 L257.3,158.1" stroke="#6e5220" stroke-width="1.9" stroke-linecap="round"/>
<path d="M256.9,168.5 L257.1,158.1" stroke="#b89848" stroke-width="1.3" stroke-linecap="round"/>
<path d="M256.8,168.0 L256.9,158.6" stroke="#dcc27a" stroke-width="0.5"/>
<ellipse cx="257.3" cy="158.1" rx="0.9" ry="0.8" fill="#e8d898" />
<path d="M262.9,168.5 L263.2,158.1" stroke="#6e5220" stroke-width="1.9" stroke-linecap="round"/>
<path d="M262.7,168.5 L263.0,158.1" stroke="#b89848" stroke-width="1.3" stroke-linecap="round"/>
<path d="M262.5,168.0 L262.8,158.6" stroke="#dcc27a" stroke-width="0.5"/>
<ellipse cx="263.2" cy="158.1" rx="0.9" ry="0.8" fill="#e8d898" />
<path d="M257.1,177.3 L257.3,166.9" stroke="#6e5220" stroke-width="1.9" stroke-linecap="round"/>
<path d="M256.9,177.3 L257.1,166.9" stroke="#b89848" stroke-width="1.3" stroke-linecap="round"/>
<path d="M256.8,176.8 L256.9,167.4" stroke="#dcc27a" stroke-width="0.5"/>
<ellipse cx="257.3" cy="166.9" rx="0.9" ry="0.8" fill="#e8d898" />
<path d="M262.9,177.3 L263.2,166.9" stroke="#6e5220" stroke-width="1.9" stroke-linecap="round"/>
<path d="M262.7,177.3 L263.0,166.9" stroke="#b89848" stroke-width="1.3" stroke-linecap="round"/>
<path d="M262.5,176.8 L262.8,167.4" stroke="#dcc27a" stroke-width="0.5"/>
<ellipse cx="263.2" cy="166.9" rx="0.9" ry="0.8" fill="#e8d898" />
<path d="M257.1,186.2 L257.3,175.8" stroke="#6e5220" stroke-width="1.9" stroke-linecap="round"/>
<path d="M256.9,186.2 L257.1,175.8" stroke="#b89848" stroke-width="1.3" stroke-linecap="round"/>
<path d="M256.8,185.7 L256.9,176.3" stroke="#dcc27a" stroke-width="0.5"/>
<ellipse cx="257.3" cy="175.8" rx="0.9" ry="0.8" fill="#e8d898" />
<path d="M262.9,186.2 L263.2,175.8" stroke="#6e5220" stroke-width="1.9" stroke-linecap="round"/>
<path d="M262.7,186.2 L263.0,175.8" stroke="#b89848" stroke-width="1.3" stroke-linecap="round"/>
<path d="M262.5,185.7 L262.8,176.3" stroke="#dcc27a" stroke-width="0.5"/>
<ellipse cx="263.2" cy="175.8" rx="0.9" ry="0.8" fill="#e8d898" />
<polygon points="336.6,160.0 350.3,160.0 350.3,186.0 336.6,186.0" fill="#1a1a1a" />
<rect x="336.6" y="160.0" width="13.7" height="7.8" fill="#242424" />
<path d="M340.0,166.0 L342.4,155.9" stroke="#6e5220" stroke-width="1.9" stroke-linecap="round"/>
<path d="M339.8,166.0 L342.2,155.9" stroke="#b89848" stroke-width="1.3" stroke-linecap="round"/>
<path d="M339.6,165.5 L342.0,156.4" stroke="#dcc27a" stroke-width="0.5"/>
<ellipse cx="342.4" cy="155.9" rx="0.9" ry="0.8" fill="#e8d898" />
<path d="M346.9,166.0 L349.4,155.9" stroke="#6e5220" stroke-width="1.9" stroke-linecap="round"/>
<path d="M346.7,166.0 L349.2,155.9" stroke="#b89848" stroke-width="1.3" stroke-linecap="round"/>
<path d="M346.5,165.5 L349.0,156.4" stroke="#dcc27a" stroke-width="0.5"/>
<ellipse cx="349.4" cy="155.9" rx="0.9" ry="0.8" fill="#e8d898" />
<path d="M340.0,172.0 L342.4,161.8" stroke="#6e5220" stroke-width="1.9" stroke-linecap="round"/>
<path d="M339.8,172.0 L342.2,161.8" stroke="#b89848" stroke-width="1.3" stroke-linecap="round"/>
<path d="M339.6,171.5 L342.0,162.3" stroke="#dcc27a" stroke-width="0.5"/>
<ellipse cx="342.4" cy="161.8" rx="0.9" ry="0.8" fill="#e8d898" />
<path d="M346.9,172.0 L349.4,161.9" stroke="#6e5220" stroke-width="1.9" stroke-linecap="round"/>
<path d="M346.7,172.0 L349.2,161.9" stroke="#b89848" stroke-width="1.3" stroke-linecap="round"/>
<path d="M346.5,171.5 L349.0,162.4" stroke="#dcc27a" stroke-width="0.5"/>
<ellipse cx="349.4" cy="161.9" rx="0.9" ry="0.8" fill="#e8d898" />
<path d="M340.0,177.9 L342.4,167.8" stroke="#6e5220" stroke-width="1.9" stroke-linecap="round"/>
<path d="M339.8,177.9 L342.2,167.8" stroke="#b89848" stroke-width="1.3" stroke-linecap="round"/>
<path d="M339.6,177.4 L342.0,168.3" stroke="#dcc27a" stroke-width="0.5"/>
<ellipse cx="342.4" cy="167.8" rx="0.9" ry="0.8" fill="#e8d898" />
<path d="M346.9,177.9 L349.4,167.9" stroke="#6e5220" stroke-width="1.9" stroke-linecap="round"/>
<path d="M346.7,177.9 L349.2,167.9" stroke="#b89848" stroke-width="1.3" stroke-linecap="round"/>
<path d="M346.5,177.4 L349.0,168.4" stroke="#dcc27a" stroke-width="0.5"/>
<ellipse cx="349.4" cy="167.9" rx="0.9" ry="0.8" fill="#e8d898" />
<path d="M340.0,183.9 L342.4,173.8" stroke="#6e5220" stroke-width="1.9" stroke-linecap="round"/>
<path d="M339.8,183.9 L342.2,173.8" stroke="#b89848" stroke-width="1.3" stroke-linecap="round"/>
<path d="M339.6,183.4 L342.0,174.3" stroke="#dcc27a" stroke-width="0.5"/>
<ellipse cx="342.4" cy="173.8" rx="0.9" ry="0.8" fill="#e8d898" />
<path d="M346.9,183.9 L349.4,173.8" stroke="#6e5220" stroke-width="1.9" stroke-linecap="round"/>
<path d="M346.7,183.9 L349.2,173.8" stroke="#b89848" stroke-width="1.3" stroke-linecap="round"/>
<path d="M346.5,183.4 L349.0,174.3" stroke="#dcc27a" stroke-width="0.5"/>
<ellipse cx="349.4" cy="173.8" rx="0.9" ry="0.8" fill="#e8d898" />
<polygon points="401.0,163.0 419.0,163.0 419.0,184.0 401.0,184.0" fill="#1a1a1a" />
<rect x="401.0" y="163.0" width="18.0" height="6.3" fill="#242424" />
<path d="M405.5,169.3 L409.9,158.4" stroke="#6e5220" stroke-width="1.9" stroke-linecap="round"/>
<path d="M405.3,169.3 L409.7,158.4" stroke="#b89848" stroke-width="1.3" stroke-linecap="round"/>
<path d="M405.1,168.8 L409.5,158.9" stroke="#dcc27a" stroke-width="0.5"/>
<ellipse cx="409.9" cy="158.4" rx="0.9" ry="0.8" fill="#e8d898" />
<path d="M414.5,169.3 L419.1,158.5" stroke="#6e5220" stroke-width="1.9" stroke-linecap="round"/>
<path d="M414.3,169.3 L418.9,158.5" stroke="#b89848" stroke-width="1.3" stroke-linecap="round"/>
<path d="M414.1,168.8 L418.7,159.0" stroke="#dcc27a" stroke-width="0.5"/>
<ellipse cx="419.1" cy="158.5" rx="0.9" ry="0.8" fill="#e8d898" />
<path d="M405.5,175.5 L409.9,164.7" stroke="#6e5220" stroke-width="1.9" stroke-linecap="round"/>
<path d="M405.3,175.5 L409.7,164.7" stroke="#b89848" stroke-width="1.3" stroke-linecap="round"/>
<path d="M405.1,175.0 L409.5,165.2" stroke="#dcc27a" stroke-width="0.5"/>
<ellipse cx="409.9" cy="164.7" rx="0.9" ry="0.8" fill="#e8d898" />
<path d="M414.5,175.5 L419.1,164.8" stroke="#6e5220" stroke-width="1.9" stroke-linecap="round"/>
<path d="M414.3,175.5 L418.9,164.8" stroke="#b89848" stroke-width="1.3" stroke-linecap="round"/>
<path d="M414.1,175.0 L418.7,165.3" stroke="#dcc27a" stroke-width="0.5"/>
<ellipse cx="419.1" cy="164.8" rx="0.9" ry="0.8" fill="#e8d898" />
<path d="M405.5,181.8 L409.9,171.0" stroke="#6e5220" stroke-width="1.9" stroke-linecap="round"/>
<path d="M405.3,181.8 L409.7,171.0" stroke="#b89848" stroke-width="1.3" stroke-linecap="round"/>
<path d="M405.1,181.3 L409.5,171.5" stroke="#dcc27a" stroke-width="0.5"/>
<ellipse cx="409.9" cy="171.0" rx="0.9" ry="0.8" fill="#e8d898" />
<path d="M414.5,181.8 L419.1,171.1" stroke="#6e5220" stroke-width="1.9" stroke-linecap="round"/>
<path d="M414.3,181.8 L418.9,171.1" stroke="#b89848" stroke-width="1.3" stroke-linecap="round"/>
<path d="M414.1,181.3 L418.7,171.6" stroke="#dcc27a" stroke-width="0.5"/>
<ellipse cx="419.1" cy="171.1" rx="0.9" ry="0.8" fill="#e8d898" />
<polygon points="406.0,187.0 421.4,187.0 421.4,199.0 406.0,199.0" fill="#1a1a1a" />
<rect x="406.0" y="187.0" width="15.4" height="3.6" fill="#242424" />
<path d="M409.9,192.1 L414.4,181.3" stroke="#6e5220" stroke-width="1.9" stroke-linecap="round"/>
<path d="M409.7,192.1 L414.2,181.3" stroke="#b89848" stroke-width="1.3" stroke-linecap="round"/>
<path d="M409.5,191.6 L414.0,181.8" stroke="#dcc27a" stroke-width="0.5"/>
<ellipse cx="414.4" cy="181.3" rx="0.9" ry="0.8" fill="#e8d898" />
<path d="M417.5,192.1 L422.3,181.4" stroke="#6e5220" stroke-width="1.9" stroke-linecap="round"/>
<path d="M417.3,192.1 L422.1,181.4" stroke="#b89848" stroke-width="1.3" stroke-linecap="round"/>
<path d="M417.1,191.6 L421.9,181.9" stroke="#dcc27a" stroke-width="0.5"/>
<ellipse cx="422.3" cy="181.4" rx="0.9" ry="0.8" fill="#e8d898" />
<path d="M409.9,197.2 L414.4,186.4" stroke="#6e5220" stroke-width="1.9" stroke-linecap="round"/>
<path d="M409.7,197.2 L414.2,186.4" stroke="#b89848" stroke-width="1.3" stroke-linecap="round"/>
<path d="M409.5,196.7 L414.0,186.9" stroke="#dcc27a" stroke-width="0.5"/>
<ellipse cx="414.4" cy="186.4" rx="0.9" ry="0.8" fill="#e8d898" />
<path d="M417.5,197.2 L422.3,186.5" stroke="#6e5220" stroke-width="1.9" stroke-linecap="round"/>
<path d="M417.3,197.2 L422.1,186.5" stroke="#b89848" stroke-width="1.3" stroke-linecap="round"/>
<path d="M417.1,196.7 L421.9,187.0" stroke="#dcc27a" stroke-width="0.5"/>
<ellipse cx="422.3" cy="186.5" rx="0.9" ry="0.8" fill="#e8d898" />
<polygon points="299.0,224.7 307.0,224.7 307.0,234.0 299.0,234.0" fill="#1a1a1a" />
<rect x="299.0" y="224.7" width="8.0" height="2.8" fill="#242424" />
<path d="M303.0,231.6 L304.4,221.3" stroke="#6e5220" stroke-width="1.9" stroke-linecap="round"/>
<path d="M302.8,231.6 L304.2,221.3" stroke="#b89848" stroke-width="1.3" stroke-linecap="round"/>
<path d="M302.6,231.1 L304.0,221.8" stroke="#dcc27a" stroke-width="0.5"/>
<ellipse cx="304.4" cy="221.3" rx="0.9" ry="0.8" fill="#e8d898" />
<polygon points="317.3,263.0 347.6,263.0 347.6,277.2 317.3,277.2" fill="#1a1a1a" />
<rect x="317.3" y="263.0" width="30.3" height="4.3" fill="#242424" />
<path d="M321.1,269.0 L323.2,257.5" stroke="#6e5220" stroke-width="1.9" stroke-linecap="round"/>
<path d="M320.9,269.0 L323.0,257.5" stroke="#b89848" stroke-width="1.3" stroke-linecap="round"/>
<path d="M320.7,268.5 L322.8,258.0" stroke="#dcc27a" stroke-width="0.5"/>
<ellipse cx="323.2" cy="257.5" rx="0.9" ry="0.8" fill="#e8d898" />
<path d="M328.7,269.0 L331.0,257.6" stroke="#6e5220" stroke-width="1.9" stroke-linecap="round"/>
<path d="M328.5,269.0 L330.8,257.6" stroke="#b89848" stroke-width="1.3" stroke-linecap="round"/>
<path d="M328.3,268.5 L330.6,258.1" stroke="#dcc27a" stroke-width="0.5"/>
<ellipse cx="331.0" cy="257.6" rx="0.9" ry="0.8" fill="#e8d898" />
<path d="M336.2,269.0 L338.8,257.6" stroke="#6e5220" stroke-width="1.9" stroke-linecap="round"/>
<path d="M336.0,269.0 L338.6,257.6" stroke="#b89848" stroke-width="1.3" stroke-linecap="round"/>
<path d="M335.8,268.5 L338.4,258.1" stroke="#dcc27a" stroke-width="0.5"/>
<ellipse cx="338.8" cy="257.6" rx="0.9" ry="0.8" fill="#e8d898" />
<path d="M343.8,269.0 L346.6,257.7" stroke="#6e5220" stroke-width="1.9" stroke-linecap="round"/>
<path d="M343.6,269.0 L346.4,257.7" stroke="#b89848" stroke-width="1.3" stroke-linecap="round"/>
<path d="M343.4,268.5 L346.2,258.2" stroke="#dcc27a" stroke-width="0.5"/>
<ellipse cx="346.6" cy="257.7" rx="0.9" ry="0.8" fill="#e8d898" />
<path d="M321.1,275.1 L323.2,263.6" stroke="#6e5220" stroke-width="1.9" stroke-linecap="round"/>
<path d="M320.9,275.1 L323.0,263.6" stroke="#b89848" stroke-width="1.3" stroke-linecap="round"/>
<path d="M320.7,274.6 L322.8,264.1" stroke="#dcc27a" stroke-width="0.5"/>
<ellipse cx="323.2" cy="263.6" rx="0.9" ry="0.8" fill="#e8d898" />
<path d="M328.7,275.1 L331.0,263.6" stroke="#6e5220" stroke-width="1.9" stroke-linecap="round"/>
<path d="M328.5,275.1 L330.8,263.6" stroke="#b89848" stroke-width="1.3" stroke-linecap="round"/>
<path d="M328.3,274.6 L330.6,264.1" stroke="#dcc27a" stroke-width="0.5"/>
<ellipse cx="331.0" cy="263.6" rx="0.9" ry="0.8" fill="#e8d898" />
<path d="M336.2,275.1 L338.8,263.7" stroke="#6e5220" stroke-width="1.9" stroke-linecap="round"/>
<path d="M336.0,275.1 L338.6,263.7" stroke="#b89848" stroke-width="1.3" stroke-linecap="round"/>
<path d="M335.8,274.6 L338.4,264.2" stroke="#dcc27a" stroke-width="0.5"/>
<ellipse cx="338.8" cy="263.7" rx="0.9" ry="0.8" fill="#e8d898" />
<path d="M343.8,275.1 L346.6,263.7" stroke="#6e5220" stroke-width="1.9" stroke-linecap="round"/>
<path d="M343.6,275.1 L346.4,263.7" stroke="#b89848" stroke-width="1.3" stroke-linecap="round"/>
<path d="M343.4,274.6 L346.2,264.2" stroke="#dcc27a" stroke-width="0.5"/>
<ellipse cx="346.6" cy="263.7" rx="0.9" ry="0.8" fill="#e8d898" />
<polygon points="387.4,291.0 404.0,291.0 404.0,299.7 387.4,299.7" fill="#1a1a1a" />
<rect x="387.4" y="291.0" width="16.6" height="2.6" fill="#242424" />
<path d="M391.5,297.4 L395.2,287.7" stroke="#6e5220" stroke-width="1.9" stroke-linecap="round"/>
<path d="M391.3,297.4 L395.0,287.7" stroke="#b89848" stroke-width="1.3" stroke-linecap="round"/>
<path d="M391.1,296.9 L394.8,288.2" stroke="#dcc27a" stroke-width="0.5"/>
<ellipse cx="395.2" cy="287.7" rx="0.9" ry="0.8" fill="#e8d898" />
<path d="M399.9,297.4 L403.7,287.8" stroke="#6e5220" stroke-width="1.9" stroke-linecap="round"/>
<path d="M399.7,297.4 L403.5,287.8" stroke="#b89848" stroke-width="1.3" stroke-linecap="round"/>
<path d="M399.5,296.9 L403.3,288.3" stroke="#dcc27a" stroke-width="0.5"/>
<ellipse cx="403.7" cy="287.8" rx="0.9" ry="0.8" fill="#e8d898" />
<polygon points="190.2,246.0 206.7,246.0 206.7,254.0 190.2,254.0" fill="#1a1a1a" />
<rect x="190.2" y="246.0" width="16.5" height="2.4" fill="#242424" />
<path d="M194.3,251.9 L192.6,240.3" stroke="#6e5220" stroke-width="1.9" stroke-linecap="round"/>
<path d="M194.1,251.9 L192.4,240.3" stroke="#b89848" stroke-width="1.3" stroke-linecap="round"/>
<path d="M193.9,251.4 L192.2,240.8" stroke="#dcc27a" stroke-width="0.5"/>
<ellipse cx="192.6" cy="240.3" rx="0.9" ry="0.8" fill="#e8d898" />
<path d="M202.6,251.9 L201.1,240.3" stroke="#6e5220" stroke-width="1.9" stroke-linecap="round"/>
<path d="M202.4,251.9 L200.9,240.3" stroke="#b89848" stroke-width="1.3" stroke-linecap="round"/>
<path d="M202.2,251.4 L200.7,240.8" stroke="#dcc27a" stroke-width="0.5"/>
<ellipse cx="201.1" cy="240.3" rx="0.9" ry="0.8" fill="#e8d898" />
<polygon points="127.0,257.0 143.6,257.0 143.6,267.0 127.0,267.0" fill="#1a1a1a" />
<rect x="127.0" y="257.0" width="16.6" height="3.0" fill="#242424" />
<path d="M131.2,264.4 L127.7,253.2" stroke="#6e5220" stroke-width="1.9" stroke-linecap="round"/>
<path d="M131.0,264.4 L127.5,253.2" stroke="#b89848" stroke-width="1.3" stroke-linecap="round"/>
<path d="M130.8,263.9 L127.3,253.7" stroke="#dcc27a" stroke-width="0.5"/>
<ellipse cx="127.7" cy="253.2" rx="0.9" ry="0.8" fill="#e8d898" />
<path d="M139.4,264.4 L136.2,253.2" stroke="#6e5220" stroke-width="1.9" stroke-linecap="round"/>
<path d="M139.2,264.4 L136.0,253.2" stroke="#b89848" stroke-width="1.3" stroke-linecap="round"/>
<path d="M139.0,263.9 L135.8,253.7" stroke="#dcc27a" stroke-width="0.5"/>
<ellipse cx="136.2" cy="253.2" rx="0.9" ry="0.8" fill="#e8d898" />
<polygon points="98.3,320.0 110.2,320.0 110.2,328.0 98.3,328.0" fill="#1a1a1a" />
<rect x="98.3" y="320.0" width="11.9" height="2.4" fill="#242424" />
<path d="M104.2,325.9 L100.1,315.0" stroke="#6e5220" stroke-width="1.9" stroke-linecap="round"/>
<path d="M104.0,325.9 L99.9,315.0" stroke="#b89848" stroke-width="1.3" stroke-linecap="round"/>
<path d="M103.8,325.4 L99.7,315.5" stroke="#dcc27a" stroke-width="0.5"/>
<ellipse cx="100.1" cy="315.0" rx="0.9" ry="0.8" fill="#e8d898" />
<polygon points="118.6,320.0 135.0,320.0 135.0,328.0 118.6,328.0" fill="#1a1a1a" />
<rect x="118.6" y="320.0" width="16.4" height="2.4" fill="#242424" />
<path d="M122.7,325.9 L119.0,314.8" stroke="#6e5220" stroke-width="1.9" stroke-linecap="round"/>
<path d="M122.5,325.9 L118.8,314.8" stroke="#b89848" stroke-width="1.3" stroke-linecap="round"/>
<path d="M122.3,325.4 L118.6,315.3" stroke="#dcc27a" stroke-width="0.5"/>
<ellipse cx="119.0" cy="314.8" rx="0.9" ry="0.8" fill="#e8d898" />
<path d="M130.9,325.9 L127.4,314.8" stroke="#6e5220" stroke-width="1.9" stroke-linecap="round"/>
<path d="M130.7,325.9 L127.2,314.8" stroke="#b89848" stroke-width="1.3" stroke-linecap="round"/>
<path d="M130.5,325.4 L127.0,315.3" stroke="#dcc27a" stroke-width="0.5"/>
<ellipse cx="127.4" cy="314.8" rx="0.9" ry="0.8" fill="#e8d898" />
<polygon points="98.3,334.0 109.0,334.0 109.0,341.0 98.3,341.0" fill="#1a1a1a" />
<rect x="98.3" y="334.0" width="10.7" height="2.1" fill="#242424" />
<path d="M103.7,339.2 L99.9,329.5" stroke="#6e5220" stroke-width="1.9" stroke-linecap="round"/>
<path d="M103.5,339.2 L99.7,329.5" stroke="#b89848" stroke-width="1.3" stroke-linecap="round"/>
<path d="M103.2,338.7 L99.5,330.0" stroke="#dcc27a" stroke-width="0.5"/>
<ellipse cx="99.9" cy="329.5" rx="0.9" ry="0.8" fill="#e8d898" />
<polygon points="116.0,338.0 129.0,338.0 129.0,345.0 116.0,345.0" fill="#1a1a1a" />
<rect x="116.0" y="338.0" width="13.0" height="2.1" fill="#242424" />
<path d="M122.5,343.2 L119.2,333.3" stroke="#6e5220" stroke-width="1.9" stroke-linecap="round"/>
<path d="M122.3,343.2 L119.0,333.3" stroke="#b89848" stroke-width="1.3" stroke-linecap="round"/>
<path d="M122.1,342.7 L118.8,333.8" stroke="#dcc27a" stroke-width="0.5"/>
<ellipse cx="119.2" cy="333.3" rx="0.9" ry="0.8" fill="#e8d898" />
<polygon points="146.0,194.0 156.6,194.0 156.6,206.0 146.0,206.0" fill="#1a1a1a" />
<rect x="146.0" y="194.0" width="10.6" height="3.6" fill="#242424" />
<path d="M151.3,202.9 L148.4,191.6" stroke="#6e5220" stroke-width="1.9" stroke-linecap="round"/>
<path d="M151.1,202.9 L148.2,191.6" stroke="#b89848" stroke-width="1.3" stroke-linecap="round"/>
<path d="M150.9,202.4 L148.0,192.1" stroke="#dcc27a" stroke-width="0.5"/>
<ellipse cx="148.4" cy="191.6" rx="0.9" ry="0.8" fill="#e8d898" />
<polygon points="148.0,213.0 158.6,213.0 158.6,227.0 148.0,227.0" fill="#1a1a1a" />
<rect x="148.0" y="213.0" width="10.6" height="4.2" fill="#242424" />
<path d="M153.3,223.4 L150.1,210.8" stroke="#6e5220" stroke-width="1.9" stroke-linecap="round"/>
<path d="M153.1,223.4 L149.9,210.8" stroke="#b89848" stroke-width="1.3" stroke-linecap="round"/>
<path d="M152.9,222.9 L149.7,211.3" stroke="#dcc27a" stroke-width="0.5"/>
<ellipse cx="150.1" cy="210.8" rx="0.9" ry="0.8" fill="#e8d898" />
<polygon points="161.0,214.0 171.0,214.0 171.0,228.0 161.0,228.0" fill="#1a1a1a" />
<rect x="161.0" y="214.0" width="10.0" height="4.2" fill="#242424" />
<path d="M166.0,224.4 L163.2,211.7" stroke="#6e5220" stroke-width="1.9" stroke-linecap="round"/>
<path d="M165.8,224.4 L163.0,211.7" stroke="#b89848" stroke-width="1.3" stroke-linecap="round"/>
<path d="M165.6,223.9 L162.8,212.2" stroke="#dcc27a" stroke-width="0.5"/>
<ellipse cx="163.2" cy="211.7" rx="0.9" ry="0.8" fill="#e8d898" />
<rect x="175.8" y="177.0" width="3.0" height="6.8" fill="#e0e0e0" />
<rect x="175.8" y="178.9" width="3.0" height="3.0" fill="#8a6a58" />
<rect x="214.0" y="175.0" width="3.5" height="7.0" fill="#e0e0e0" />
<rect x="214.0" y="177.0" width="3.5" height="3.1" fill="#8a6a58" />
<rect x="214.0" y="184.0" width="3.5" height="7.0" fill="#e0e0e0" />
<rect x="214.0" y="186.0" width="3.5" height="3.1" fill="#8a6a58" />
<rect x="235.0" y="164.0" width="5.0" height="4.5" fill="#e0e0e0" />
<rect x="236.4" y="164.0" width="2.2" height="4.5" fill="#8a6a58" />
<rect x="241.5" y="168.0" width="4.0" height="7.0" fill="#e0e0e0" />
<rect x="241.5" y="170.0" width="4.0" height="3.1" fill="#8a6a58" />
<rect x="226.0" y="195.0" width="5.0" height="4.0" fill="#e0e0e0" />
<rect x="227.4" y="195.0" width="2.2" height="4.0" fill="#8a6a58" />
<rect x="112.0" y="242.0" width="8.0" height="4.2" fill="#e0e0e0" />
<rect x="114.2" y="242.0" width="3.5" height="4.2" fill="#1c1c1c" />
<rect x="112.0" y="247.4" width="8.0" height="4.2" fill="#e0e0e0" />
<rect x="114.2" y="247.4" width="3.5" height="4.2" fill="#1c1c1c" />
<rect x="213.0" y="250.0" width="8.0" height="4.0" fill="#e0e0e0" />
<rect x="215.2" y="250.0" width="3.5" height="4.0" fill="#1c1c1c" />
<rect x="226.0" y="232.0" width="7.0" height="4.0" fill="#e0e0e0" />
<rect x="228.0" y="232.0" width="3.1" height="4.0" fill="#1c1c1c" />
<rect x="148.5" y="253.5" width="7.5" height="4.5" fill="#e0e0e0" />
<rect x="150.6" y="253.5" width="3.3" height="4.5" fill="#1c1c1c" />
<rect x="160.6" y="231.5" width="6.0" height="6.8" fill="#e0e0e0" />
<rect x="160.6" y="233.4" width="6.0" height="3.0" fill="#1c1c1c" />
<rect x="108.0" y="280.0" width="8.0" height="4.0" fill="#e0e0e0" />
<rect x="110.2" y="280.0" width="3.5" height="4.0" fill="#1c1c1c" />
<rect x="108.0" y="286.0" width="8.0" height="4.0" fill="#e0e0e0" />
<rect x="110.2" y="286.0" width="3.5" height="4.0" fill="#1c1c1c" />
<rect x="136.4" y="275.5" width="8.4" height="3.5" fill="#e0e0e0" />
<rect x="138.8" y="275.5" width="3.7" height="3.5" fill="#1c1c1c" />
<rect x="136.4" y="285.0" width="8.4" height="3.6" fill="#e0e0e0" />
<rect x="138.8" y="285.0" width="3.7" height="3.6" fill="#1c1c1c" />
<rect x="136.4" y="295.0" width="8.4" height="3.6" fill="#e0e0e0" />
<rect x="138.8" y="295.0" width="3.7" height="3.6" fill="#1c1c1c" />
<rect x="135.5" y="305.0" width="8.4" height="3.6" fill="#e0e0e0" />
<rect x="137.9" y="305.0" width="3.7" height="3.6" fill="#1c1c1c" />
<rect x="116.0" y="264.8" width="6.0" height="4.7" fill="#e0e0e0" />
<rect x="117.7" y="264.8" width="2.6" height="4.7" fill="#1c1c1c" />
<rect x="320.8" y="283.3" width="5.2" height="7.7" fill="#e0e0e0" />
<rect x="320.8" y="285.5" width="5.2" height="3.4" fill="#1c1c1c" />
<rect x="327.7" y="283.3" width="5.3" height="7.7" fill="#e0e0e0" />
<rect x="327.7" y="285.5" width="5.3" height="3.4" fill="#1c1c1c" />
<rect x="334.6" y="283.3" width="5.2" height="7.7" fill="#e0e0e0" />
<rect x="334.6" y="285.5" width="5.2" height="3.4" fill="#1c1c1c" />
<rect x="341.6" y="283.3" width="5.2" height="7.7" fill="#e0e0e0" />
<rect x="341.6" y="285.5" width="5.2" height="3.4" fill="#1c1c1c" />
<rect x="388.0" y="270.3" width="7.0" height="4.3" fill="#e0e0e0" />
<rect x="390.0" y="270.3" width="3.1" height="4.3" fill="#1c1c1c" />
<rect x="388.0" y="275.5" width="7.0" height="4.3" fill="#e0e0e0" />
<rect x="390.0" y="275.5" width="3.1" height="4.3" fill="#1c1c1c" />
<rect x="269.0" y="192.7" width="6.0" height="5.7" fill="#e0e0e0" />
<rect x="270.7" y="192.7" width="2.6" height="5.7" fill="#1c1c1c" />
<rect x="323.0" y="210.0" width="7.0" height="9.0" fill="#e0e0e0" />
<rect x="323.0" y="212.5" width="7.0" height="4.0" fill="#1c1c1c" />
<rect x="320.6" y="225.9" width="6.8" height="6.8" fill="#e0e0e0" />
<rect x="322.5" y="225.9" width="3.0" height="6.8" fill="#1c1c1c" />
<rect x="297.7" y="244.0" width="9.2" height="4.7" fill="#e0e0e0" />
<rect x="300.3" y="244.0" width="4.0" height="4.7" fill="#1c1c1c" />
<rect x="422.0" y="169.0" width="6.0" height="3.0" fill="#e0e0e0" />
<rect x="423.7" y="169.0" width="2.6" height="3.0" fill="#1c1c1c" />
<rect x="423.6" y="176.5" width="6.0" height="3.0" fill="#e0e0e0" />
<rect x="425.3" y="176.5" width="2.6" height="3.0" fill="#1c1c1c" />
<rect x="447.9" y="159.0" width="4.5" height="6.0" fill="#e0e0e0" />
<rect x="447.9" y="160.7" width="4.5" height="2.6" fill="#1c1c1c" />
<rect x="271.0" y="287.0" width="7.0" height="4.0" fill="#e0e0e0" />
<rect x="273.0" y="287.0" width="3.1" height="4.0" fill="#1c1c1c" />
<rect x="169.7" y="316.6" width="8.0" height="4.0" fill="#e0e0e0" />
<rect x="171.9" y="316.6" width="3.5" height="4.0" fill="#1c1c1c" />
<rect x="252.0" y="205.0" width="7.0" height="5.0" fill="#e0e0e0" />
<rect x="254.0" y="205.0" width="3.1" height="5.0" fill="#8a6a58" />
<rect x="270.0" y="203.0" width="7.0" height="4.6" fill="#e0e0e0" />
<rect x="272.0" y="203.0" width="3.1" height="4.6" fill="#8a6a58" />
<rect x="300.0" y="207.6" width="7.0" height="5.0" fill="#e0e0e0" />
<rect x="302.0" y="207.6" width="3.1" height="5.0" fill="#8a6a58" />
<rect x="300.0" y="213.0" width="7.0" height="5.0" fill="#e0e0e0" />
<rect x="302.0" y="213.0" width="3.1" height="5.0" fill="#8a6a58" />
<rect x="320.6" y="235.0" width="6.8" height="4.6" fill="#e0e0e0" />
<rect x="322.5" y="235.0" width="3.0" height="4.6" fill="#8a6a58" />
<rect x="390.0" y="280.7" width="7.0" height="4.3" fill="#e0e0e0" />
<rect x="392.0" y="280.7" width="3.1" height="4.3" fill="#8a6a58" />
<rect x="363.0" y="163.6" width="3.8" height="5.4" fill="#e0e0e0" />
<rect x="363.0" y="165.1" width="3.8" height="2.4" fill="#8a6a58" />
<rect x="365.3" y="171.0" width="3.7" height="7.8" fill="#e0e0e0" />
<rect x="365.3" y="173.2" width="3.7" height="3.4" fill="#8a6a58" />
<rect x="360.0" y="171.0" width="3.0" height="7.8" fill="#e0e0e0" />
<rect x="360.0" y="173.2" width="3.0" height="3.4" fill="#8a6a58" />
<rect x="389.5" y="163.0" width="4.5" height="6.0" fill="#e0e0e0" />
<rect x="389.5" y="164.7" width="4.5" height="2.6" fill="#8a6a58" />
<rect x="380.5" y="158.3" width="5.3" height="3.7" fill="#e0e0e0" />
<rect x="382.0" y="158.3" width="2.3" height="3.7" fill="#8a6a58" />
<rect x="240.0" y="258.0" width="7.0" height="5.0" fill="#e0e0e0" />
<rect x="242.0" y="258.0" width="3.1" height="5.0" fill="#8a6a58" />
<rect x="262.0" y="258.0" width="7.0" height="5.0" fill="#e0e0e0" />
<rect x="264.0" y="258.0" width="3.1" height="5.0" fill="#8a6a58" />
<rect x="300.0" y="266.0" width="9.0" height="5.0" fill="#e0e0e0" />
<rect x="302.5" y="266.0" width="4.0" height="5.0" fill="#8a6a58" />
<rect x="282.0" y="234.0" width="5.0" height="4.0" fill="#e0e0e0" />
<rect x="283.4" y="234.0" width="2.2" height="4.0" fill="#8a6a58" />
<rect x="232.0" y="257.0" width="5.0" height="4.0" fill="#e0e0e0" />
<rect x="233.4" y="257.0" width="2.2" height="4.0" fill="#8a6a58" />
<rect x="285.0" y="248.0" width="5.0" height="7.0" fill="#e0e0e0" />
<rect x="285.0" y="250.0" width="5.0" height="3.1" fill="#8a6a58" />
<rect x="293.0" y="250.0" width="5.0" height="7.0" fill="#e0e0e0" />
<rect x="293.0" y="252.0" width="5.0" height="3.1" fill="#8a6a58" />
<rect x="165.0" y="255.7" width="7.0" height="4.6" fill="#e0e0e0" />
<rect x="167.0" y="255.7" width="3.1" height="4.6" fill="#8a6a58" />
<rect x="214.0" y="243.0" width="7.0" height="5.0" fill="#e0e0e0" />
<rect x="216.0" y="243.0" width="3.1" height="5.0" fill="#8a6a58" />
<rect x="224.0" y="240.0" width="5.0" height="5.0" fill="#e0e0e0" />
<rect x="225.4" y="240.0" width="2.2" height="5.0" fill="#8a6a58" />
<rect x="121.0" y="273.0" width="10.7" height="5.0" fill="#f2f0e8" />
<rect x="121.0" y="273.0" width="1.8" height="5.0" fill="#c8a040" />
<rect x="129.9" y="273.0" width="1.8" height="5.0" fill="#c8a040" />
<rect x="121.0" y="277.0" width="10.7" height="1.0" fill="#b8b0a0" />
<rect x="119.8" y="283.8" width="10.7" height="6.0" fill="#f2f0e8" />
<rect x="119.8" y="283.8" width="1.8" height="6.0" fill="#c8a040" />
<rect x="128.7" y="283.8" width="1.8" height="6.0" fill="#c8a040" />
<rect x="119.8" y="288.8" width="10.7" height="1.0" fill="#b8b0a0" />
<rect x="118.6" y="295.7" width="11.9" height="6.0" fill="#f2f0e8" />
<rect x="118.6" y="295.7" width="1.8" height="6.0" fill="#c8a040" />
<rect x="128.7" y="295.7" width="1.8" height="6.0" fill="#c8a040" />
<rect x="118.6" y="300.7" width="11.9" height="1.0" fill="#b8b0a0" />
<rect x="117.4" y="306.4" width="11.9" height="6.0" fill="#f2f0e8" />
<rect x="117.4" y="306.4" width="1.8" height="6.0" fill="#c8a040" />
<rect x="127.5" y="306.4" width="1.8" height="6.0" fill="#c8a040" />
<rect x="117.4" y="311.4" width="11.9" height="1.0" fill="#b8b0a0" />
<rect x="433.5" y="167.4" width="9.8" height="4.6" fill="#f2f0e8" />
<rect x="433.5" y="167.4" width="1.8" height="4.6" fill="#c8a040" />
<rect x="441.5" y="167.4" width="1.8" height="4.6" fill="#c8a040" />
<rect x="433.5" y="171.0" width="9.8" height="1.0" fill="#b8b0a0" />
<rect x="435.0" y="174.2" width="9.8" height="5.3" fill="#f2f0e8" />
<rect x="435.0" y="174.2" width="1.8" height="5.3" fill="#c8a040" />
<rect x="443.0" y="174.2" width="1.8" height="5.3" fill="#c8a040" />
<rect x="435.0" y="178.5" width="9.8" height="1.0" fill="#b8b0a0" />
<rect x="327.4" y="196.0" width="6.9" height="8.0" fill="#f2f0e8" />
<rect x="327.4" y="202.2" width="6.9" height="1.8" fill="#c8a040" />
<rect x="329.7" y="220.0" width="8.0" height="11.6" fill="#f2f0e8" />
<rect x="329.7" y="229.8" width="8.0" height="1.8" fill="#c8a040" />
<rect x="165.6" y="327.0" width="8.0" height="12.0" fill="#f2f0e8" />
<rect x="165.6" y="337.2" width="8.0" height="1.8" fill="#c8a040" />
<ellipse cx="339.9" cy="193.5" rx="1.3" ry="1.3" fill="#c8a838" />
<ellipse cx="340.9" cy="204.7" rx="1.3" ry="1.3" fill="#c8a838" />
<polygon points="341.4,187.0 361.4,186.5 361.9,206.7 341.9,207.2" fill="#d6d6d6" />
<polygon points="341.9,202.7 361.9,202.2 361.9,206.7 341.9,207.2" fill="#303030" />
<polygon points="359.9,187.0 361.4,186.5 361.9,203.2 360.4,203.2" fill="#b0b0b0" />
<ellipse cx="345.4" cy="190.6" rx="1.6" ry="1.5" fill="#747474" />
<ellipse cx="357.4" cy="190.6" rx="1.6" ry="1.5" fill="#747474" />
<ellipse cx="345.4" cy="200.0" rx="1.6" ry="1.5" fill="#747474" />
<ellipse cx="357.4" cy="200.0" rx="1.6" ry="1.5" fill="#747474" />
<rect x="347.2" y="192.9" width="10.0" height="3.0" fill="#c42020" />
<ellipse cx="352.2" cy="195.9" rx="5.0" ry="3.5" fill="#c42020" />
<ellipse cx="352.2" cy="192.9" rx="5.0" ry="4.0" fill="#f04a4a" />
<ellipse cx="343.1" cy="217.0" rx="1.3" ry="1.3" fill="#c8a838" />
<ellipse cx="344.1" cy="229.0" rx="1.3" ry="1.3" fill="#c8a838" />
<polygon points="344.6,210.0 365.2,209.5 365.7,231.0 345.1,231.5" fill="#d6d6d6" />
<polygon points="345.1,227.0 365.7,226.5 365.7,231.0 345.1,231.5" fill="#303030" />
<polygon points="363.7,210.0 365.2,209.5 365.7,227.5 364.2,227.5" fill="#b0b0b0" />
<ellipse cx="348.7" cy="213.8" rx="1.6" ry="1.5" fill="#747474" />
<ellipse cx="361.1" cy="213.8" rx="1.6" ry="1.5" fill="#747474" />
<ellipse cx="348.7" cy="224.0" rx="1.6" ry="1.5" fill="#747474" />
<ellipse cx="361.1" cy="224.0" rx="1.6" ry="1.5" fill="#747474" />
<rect x="350.3" y="215.5" width="10.4" height="3.1" fill="#c42020" />
<ellipse cx="355.5" cy="218.6" rx="5.2" ry="3.6" fill="#c42020" />
<ellipse cx="355.5" cy="215.5" rx="5.2" ry="4.2" fill="#f04a4a" />
<ellipse cx="346.5" cy="241.7" rx="1.3" ry="1.3" fill="#c8a838" />
<ellipse cx="347.5" cy="253.7" rx="1.3" ry="1.3" fill="#c8a838" />
<polygon points="348.0,234.7 369.0,234.2 369.5,255.7 348.5,256.2" fill="#d6d6d6" />
<polygon points="348.5,251.7 369.5,251.2 369.5,255.7 348.5,256.2" fill="#303030" />
<polygon points="367.5,234.7 369.0,234.2 369.5,252.2 368.0,252.2" fill="#b0b0b0" />
<ellipse cx="352.2" cy="238.5" rx="1.6" ry="1.5" fill="#747474" />
<ellipse cx="364.8" cy="238.5" rx="1.6" ry="1.5" fill="#747474" />
<ellipse cx="352.2" cy="248.7" rx="1.6" ry="1.5" fill="#747474" />
<ellipse cx="364.8" cy="248.7" rx="1.6" ry="1.5" fill="#747474" />
<rect x="354.0" y="240.5" width="10.8" height="3.2" fill="#c42020" />
<ellipse cx="359.4" cy="243.7" rx="5.4" ry="3.8" fill="#c42020" />
<ellipse cx="359.4" cy="240.5" rx="5.4" ry="4.3" fill="#f04a4a" />
<ellipse cx="351.3" cy="271.0" rx="1.3" ry="1.3" fill="#c8a838" />
<ellipse cx="352.3" cy="283.9" rx="1.3" ry="1.3" fill="#c8a838" />
<polygon points="352.8,263.4 375.3,262.9 375.8,285.9 353.3,286.4" fill="#d6d6d6" />
<polygon points="353.3,281.9 375.8,281.4 375.8,285.9 353.3,286.4" fill="#303030" />
<polygon points="373.8,263.4 375.3,262.9 375.8,282.4 374.3,282.4" fill="#b0b0b0" />
<ellipse cx="357.3" cy="267.6" rx="1.6" ry="1.5" fill="#747474" />
<ellipse cx="370.8" cy="267.6" rx="1.6" ry="1.5" fill="#747474" />
<ellipse cx="357.3" cy="278.6" rx="1.6" ry="1.5" fill="#747474" />
<ellipse cx="370.8" cy="278.6" rx="1.6" ry="1.5" fill="#747474" />
<rect x="359.2" y="270.0" width="11.6" height="3.5" fill="#c42020" />
<ellipse cx="365.0" cy="273.5" rx="5.8" ry="4.1" fill="#c42020" />
<ellipse cx="365.0" cy="270.0" rx="5.8" ry="4.6" fill="#f04a4a" />
<polygon points="93.0,244.0 106.0,245.0 96.5,336.5 76.0,336.0" fill="#1c1c1c" />
<polygon points="100.0,244.5 106.0,245.0 96.5,336.5 91.0,336.3" fill="#111111" />
<path d="M86.4,240.2 L95.9,246.7" stroke="#7a5c22" stroke-width="2.4" stroke-linecap="round"/>
<path d="M86.1,239.9 L95.6,246.4" stroke="#b49450" stroke-width="1.4" stroke-linecap="round"/>
<ellipse cx="86.4" cy="240.2" rx="1.0" ry="1.0" fill="#eedc98" />
<path d="M94.8,239.3 L104.3,245.8" stroke="#7a5c22" stroke-width="2.4" stroke-linecap="round"/>
<path d="M94.5,239.0 L104.0,245.5" stroke="#b49450" stroke-width="1.4" stroke-linecap="round"/>
<ellipse cx="94.8" cy="239.3" rx="1.0" ry="1.0" fill="#eedc98" />
<path d="M85.4,247.5 L94.9,254.0" stroke="#7a5c22" stroke-width="2.4" stroke-linecap="round"/>
<path d="M85.1,247.2 L94.6,253.7" stroke="#b49450" stroke-width="1.4" stroke-linecap="round"/>
<ellipse cx="85.4" cy="247.5" rx="1.0" ry="1.0" fill="#eedc98" />
<path d="M93.8,246.6 L103.3,253.1" stroke="#7a5c22" stroke-width="2.4" stroke-linecap="round"/>
<path d="M93.5,246.3 L103.0,252.8" stroke="#b49450" stroke-width="1.4" stroke-linecap="round"/>
<ellipse cx="93.8" cy="246.6" rx="1.0" ry="1.0" fill="#eedc98" />
<path d="M84.4,254.8 L93.9,261.3" stroke="#7a5c22" stroke-width="2.4" stroke-linecap="round"/>
<path d="M84.1,254.5 L93.6,261.0" stroke="#b49450" stroke-width="1.4" stroke-linecap="round"/>
<ellipse cx="84.4" cy="254.8" rx="1.0" ry="1.0" fill="#eedc98" />
<path d="M92.8,253.9 L102.3,260.4" stroke="#7a5c22" stroke-width="2.4" stroke-linecap="round"/>
<path d="M92.5,253.6 L102.0,260.1" stroke="#b49450" stroke-width="1.4" stroke-linecap="round"/>
<ellipse cx="92.8" cy="253.9" rx="1.0" ry="1.0" fill="#eedc98" />
<path d="M83.4,262.1 L92.9,268.6" stroke="#7a5c22" stroke-width="2.4" stroke-linecap="round"/>
<path d="M83.1,261.8 L92.6,268.3" stroke="#b49450" stroke-width="1.4" stroke-linecap="round"/>
<ellipse cx="83.4" cy="262.1" rx="1.0" ry="1.0" fill="#eedc98" />
<path d="M91.8,261.2 L101.3,267.7" stroke="#7a5c22" stroke-width="2.4" stroke-linecap="round"/>
<path d="M91.5,260.9 L101.0,267.4" stroke="#b49450" stroke-width="1.4" stroke-linecap="round"/>
<ellipse cx="91.8" cy="261.2" rx="1.0" ry="1.0" fill="#eedc98" />
<path d="M82.4,269.4 L91.9,275.9" stroke="#7a5c22" stroke-width="2.4" stroke-linecap="round"/>
<path d="M82.1,269.1 L91.6,275.6" stroke="#b49450" stroke-width="1.4" stroke-linecap="round"/>
<ellipse cx="82.4" cy="269.4" rx="1.0" ry="1.0" fill="#eedc98" />
<path d="M90.8,268.5 L100.3,275.0" stroke="#7a5c22" stroke-width="2.4" stroke-linecap="round"/>
<path d="M90.5,268.2 L100.0,274.7" stroke="#b49450" stroke-width="1.4" stroke-linecap="round"/>
<ellipse cx="90.8" cy="268.5" rx="1.0" ry="1.0" fill="#eedc98" />
<path d="M81.4,276.7 L90.9,283.2" stroke="#7a5c22" stroke-width="2.4" stroke-linecap="round"/>
<path d="M81.1,276.4 L90.6,282.9" stroke="#b49450" stroke-width="1.4" stroke-linecap="round"/>
<ellipse cx="81.4" cy="276.7" rx="1.0" ry="1.0" fill="#eedc98" />
<path d="M89.8,275.8 L99.3,282.3" stroke="#7a5c22" stroke-width="2.4" stroke-linecap="round"/>
<path d="M89.5,275.5 L99.0,282.0" stroke="#b49450" stroke-width="1.4" stroke-linecap="round"/>
<ellipse cx="89.8" cy="275.8" rx="1.0" ry="1.0" fill="#eedc98" />
<path d="M80.4,284.0 L89.9,290.5" stroke="#7a5c22" stroke-width="2.4" stroke-linecap="round"/>
<path d="M80.1,283.7 L89.6,290.2" stroke="#b49450" stroke-width="1.4" stroke-linecap="round"/>
<ellipse cx="80.4" cy="284.0" rx="1.0" ry="1.0" fill="#eedc98" />
<path d="M88.8,283.1 L98.3,289.6" stroke="#7a5c22" stroke-width="2.4" stroke-linecap="round"/>
<path d="M88.5,282.8 L98.0,289.3" stroke="#b49450" stroke-width="1.4" stroke-linecap="round"/>
<ellipse cx="88.8" cy="283.1" rx="1.0" ry="1.0" fill="#eedc98" />
<path d="M79.4,291.3 L88.9,297.8" stroke="#7a5c22" stroke-width="2.4" stroke-linecap="round"/>
<path d="M79.1,291.0 L88.6,297.5" stroke="#b49450" stroke-width="1.4" stroke-linecap="round"/>
<ellipse cx="79.4" cy="291.3" rx="1.0" ry="1.0" fill="#eedc98" />
<path d="M87.8,290.4 L97.3,296.9" stroke="#7a5c22" stroke-width="2.4" stroke-linecap="round"/>
<path d="M87.5,290.1 L97.0,296.6" stroke="#b49450" stroke-width="1.4" stroke-linecap="round"/>
<ellipse cx="87.8" cy="290.4" rx="1.0" ry="1.0" fill="#eedc98" />
<path d="M78.4,298.6 L87.9,305.1" stroke="#7a5c22" stroke-width="2.4" stroke-linecap="round"/>
<path d="M78.1,298.3 L87.6,304.8" stroke="#b49450" stroke-width="1.4" stroke-linecap="round"/>
<ellipse cx="78.4" cy="298.6" rx="1.0" ry="1.0" fill="#eedc98" />
<path d="M86.8,297.7 L96.3,304.2" stroke="#7a5c22" stroke-width="2.4" stroke-linecap="round"/>
<path d="M86.5,297.4 L96.0,303.9" stroke="#b49450" stroke-width="1.4" stroke-linecap="round"/>
<ellipse cx="86.8" cy="297.7" rx="1.0" ry="1.0" fill="#eedc98" />
<path d="M77.4,305.9 L86.9,312.4" stroke="#7a5c22" stroke-width="2.4" stroke-linecap="round"/>
<path d="M77.1,305.6 L86.6,312.1" stroke="#b49450" stroke-width="1.4" stroke-linecap="round"/>
<ellipse cx="77.4" cy="305.9" rx="1.0" ry="1.0" fill="#eedc98" />
<path d="M85.8,305.0 L95.3,311.5" stroke="#7a5c22" stroke-width="2.4" stroke-linecap="round"/>
<path d="M85.5,304.7 L95.0,311.2" stroke="#b49450" stroke-width="1.4" stroke-linecap="round"/>
<ellipse cx="85.8" cy="305.0" rx="1.0" ry="1.0" fill="#eedc98" />
<path d="M76.4,313.2 L85.9,319.7" stroke="#7a5c22" stroke-width="2.4" stroke-linecap="round"/>
<path d="M76.1,312.9 L85.6,319.4" stroke="#b49450" stroke-width="1.4" stroke-linecap="round"/>
<ellipse cx="76.4" cy="313.2" rx="1.0" ry="1.0" fill="#eedc98" />
<path d="M84.8,312.3 L94.3,318.8" stroke="#7a5c22" stroke-width="2.4" stroke-linecap="round"/>
<path d="M84.5,312.0 L94.0,318.5" stroke="#b49450" stroke-width="1.4" stroke-linecap="round"/>
<ellipse cx="84.8" cy="312.3" rx="1.0" ry="1.0" fill="#eedc98" />
<path d="M75.4,320.5 L84.9,327.0" stroke="#7a5c22" stroke-width="2.4" stroke-linecap="round"/>
<path d="M75.1,320.2 L84.6,326.7" stroke="#b49450" stroke-width="1.4" stroke-linecap="round"/>
<ellipse cx="75.4" cy="320.5" rx="1.0" ry="1.0" fill="#eedc98" />
<path d="M83.8,319.6 L93.3,326.1" stroke="#7a5c22" stroke-width="2.4" stroke-linecap="round"/>
<path d="M83.5,319.3 L93.0,325.8" stroke="#b49450" stroke-width="1.4" stroke-linecap="round"/>
<ellipse cx="83.8" cy="319.6" rx="1.0" ry="1.0" fill="#eedc98" />
<path d="M74.4,327.8 L83.9,334.3" stroke="#7a5c22" stroke-width="2.4" stroke-linecap="round"/>
<path d="M74.1,327.5 L83.6,334.0" stroke="#b49450" stroke-width="1.4" stroke-linecap="round"/>
<ellipse cx="74.4" cy="327.8" rx="1.0" ry="1.0" fill="#eedc98" />
<path d="M82.8,326.9 L92.3,333.4" stroke="#7a5c22" stroke-width="2.4" stroke-linecap="round"/>
<path d="M82.5,326.6 L92.0,333.1" stroke="#b49450" stroke-width="1.4" stroke-linecap="round"/>
<ellipse cx="82.8" cy="326.9" rx="1.0" ry="1.0" fill="#eedc98" />
<polygon points="184.0,328.5 407.5,315.0 407.5,325.7 184.3,338.5" fill="#121212" />
<polygon points="184.0,334.0 407.5,321.5 407.5,325.7 184.3,338.5" fill="#1e1e1e" />
<path d="M187.0,329.3 L186.3,321.3" stroke="#5e4618" stroke-width="2.1" stroke-linecap="round"/>
<path d="M186.7,329.3 L186.0,321.3" stroke="#b09248" stroke-width="1.1" stroke-linecap="round"/>
<ellipse cx="186.3" cy="321.3" rx="0.9" ry="0.8" fill="#e0d090" />
<path d="M189.5,334.8 L188.9,326.8" stroke="#5e4618" stroke-width="2.1" stroke-linecap="round"/>
<path d="M189.2,334.8 L188.6,326.8" stroke="#b09248" stroke-width="1.1" stroke-linecap="round"/>
<ellipse cx="188.9" cy="326.8" rx="0.9" ry="0.8" fill="#e0d090" />
<path d="M196.0,328.8 L195.4,320.8" stroke="#5e4618" stroke-width="2.1" stroke-linecap="round"/>
<path d="M195.7,328.8 L195.1,320.8" stroke="#b09248" stroke-width="1.1" stroke-linecap="round"/>
<ellipse cx="195.4" cy="320.8" rx="0.9" ry="0.8" fill="#e0d090" />
<path d="M198.5,334.3 L198.0,326.3" stroke="#5e4618" stroke-width="2.1" stroke-linecap="round"/>
<path d="M198.2,334.3 L197.7,326.3" stroke="#b09248" stroke-width="1.1" stroke-linecap="round"/>
<ellipse cx="198.0" cy="326.3" rx="0.9" ry="0.8" fill="#e0d090" />
<path d="M205.0,328.2 L204.5,320.2" stroke="#5e4618" stroke-width="2.1" stroke-linecap="round"/>
<path d="M204.7,328.2 L204.2,320.2" stroke="#b09248" stroke-width="1.1" stroke-linecap="round"/>
<ellipse cx="204.5" cy="320.2" rx="0.9" ry="0.8" fill="#e0d090" />
<path d="M207.5,333.7 L207.1,325.7" stroke="#5e4618" stroke-width="2.1" stroke-linecap="round"/>
<path d="M207.2,333.7 L206.8,325.7" stroke="#b09248" stroke-width="1.1" stroke-linecap="round"/>
<ellipse cx="207.1" cy="325.7" rx="0.9" ry="0.8" fill="#e0d090" />
<path d="M214.0,327.7 L213.6,319.7" stroke="#5e4618" stroke-width="2.1" stroke-linecap="round"/>
<path d="M213.7,327.7 L213.3,319.7" stroke="#b09248" stroke-width="1.1" stroke-linecap="round"/>
<ellipse cx="213.6" cy="319.7" rx="0.9" ry="0.8" fill="#e0d090" />
<path d="M216.5,333.2 L216.1,325.2" stroke="#5e4618" stroke-width="2.1" stroke-linecap="round"/>
<path d="M216.2,333.2 L215.8,325.2" stroke="#b09248" stroke-width="1.1" stroke-linecap="round"/>
<ellipse cx="216.1" cy="325.2" rx="0.9" ry="0.8" fill="#e0d090" />
<path d="M223.0,327.1 L222.7,319.1" stroke="#5e4618" stroke-width="2.1" stroke-linecap="round"/>
<path d="M222.7,327.1 L222.4,319.1" stroke="#b09248" stroke-width="1.1" stroke-linecap="round"/>
<ellipse cx="222.7" cy="319.1" rx="0.9" ry="0.8" fill="#e0d090" />
<path d="M225.5,332.6 L225.2,324.6" stroke="#5e4618" stroke-width="2.1" stroke-linecap="round"/>
<path d="M225.2,332.6 L224.9,324.6" stroke="#b09248" stroke-width="1.1" stroke-linecap="round"/>
<ellipse cx="225.2" cy="324.6" rx="0.9" ry="0.8" fill="#e0d090" />
<path d="M232.0,326.6 L231.8,318.6" stroke="#5e4618" stroke-width="2.1" stroke-linecap="round"/>
<path d="M231.7,326.6 L231.5,318.6" stroke="#b09248" stroke-width="1.1" stroke-linecap="round"/>
<ellipse cx="231.8" cy="318.6" rx="0.9" ry="0.8" fill="#e0d090" />
<path d="M234.5,332.1 L234.3,324.1" stroke="#5e4618" stroke-width="2.1" stroke-linecap="round"/>
<path d="M234.2,332.1 L234.0,324.1" stroke="#b09248" stroke-width="1.1" stroke-linecap="round"/>
<ellipse cx="234.3" cy="324.1" rx="0.9" ry="0.8" fill="#e0d090" />
<path d="M241.0,326.1 L240.9,318.1" stroke="#5e4618" stroke-width="2.1" stroke-linecap="round"/>
<path d="M240.7,326.1 L240.6,318.1" stroke="#b09248" stroke-width="1.1" stroke-linecap="round"/>
<ellipse cx="240.9" cy="318.1" rx="0.9" ry="0.8" fill="#e0d090" />
<path d="M243.5,331.6 L243.4,323.6" stroke="#5e4618" stroke-width="2.1" stroke-linecap="round"/>
<path d="M243.2,331.6 L243.1,323.6" stroke="#b09248" stroke-width="1.1" stroke-linecap="round"/>
<ellipse cx="243.4" cy="323.6" rx="0.9" ry="0.8" fill="#e0d090" />
<path d="M250.0,325.5 L250.0,317.5" stroke="#5e4618" stroke-width="2.1" stroke-linecap="round"/>
<path d="M249.7,325.5 L249.7,317.5" stroke="#b09248" stroke-width="1.1" stroke-linecap="round"/>
<ellipse cx="250.0" cy="317.5" rx="0.9" ry="0.8" fill="#e0d090" />
<path d="M252.5,331.0 L252.5,323.0" stroke="#5e4618" stroke-width="2.1" stroke-linecap="round"/>
<path d="M252.2,331.0 L252.2,323.0" stroke="#b09248" stroke-width="1.1" stroke-linecap="round"/>
<ellipse cx="252.5" cy="323.0" rx="0.9" ry="0.8" fill="#e0d090" />
<path d="M259.0,325.0 L259.1,317.0" stroke="#5e4618" stroke-width="2.1" stroke-linecap="round"/>
<path d="M258.7,325.0 L258.8,317.0" stroke="#b09248" stroke-width="1.1" stroke-linecap="round"/>
<ellipse cx="259.1" cy="317.0" rx="0.9" ry="0.8" fill="#e0d090" />
<path d="M261.5,330.5 L261.6,322.5" stroke="#5e4618" stroke-width="2.1" stroke-linecap="round"/>
<path d="M261.2,330.5 L261.3,322.5" stroke="#b09248" stroke-width="1.1" stroke-linecap="round"/>
<ellipse cx="261.6" cy="322.5" rx="0.9" ry="0.8" fill="#e0d090" />
<path d="M268.0,324.4 L268.2,316.4" stroke="#5e4618" stroke-width="2.1" stroke-linecap="round"/>
<path d="M267.7,324.4 L267.9,316.4" stroke="#b09248" stroke-width="1.1" stroke-linecap="round"/>
<ellipse cx="268.2" cy="316.4" rx="0.9" ry="0.8" fill="#e0d090" />
<path d="M270.5,329.9 L270.7,321.9" stroke="#5e4618" stroke-width="2.1" stroke-linecap="round"/>
<path d="M270.2,329.9 L270.4,321.9" stroke="#b09248" stroke-width="1.1" stroke-linecap="round"/>
<ellipse cx="270.7" cy="321.9" rx="0.9" ry="0.8" fill="#e0d090" />
<path d="M277.0,323.9 L277.3,315.9" stroke="#5e4618" stroke-width="2.1" stroke-linecap="round"/>
<path d="M276.7,323.9 L277.0,315.9" stroke="#b09248" stroke-width="1.1" stroke-linecap="round"/>
<ellipse cx="277.3" cy="315.9" rx="0.9" ry="0.8" fill="#e0d090" />
<path d="M279.5,329.4 L279.8,321.4" stroke="#5e4618" stroke-width="2.1" stroke-linecap="round"/>
<path d="M279.2,329.4 L279.5,321.4" stroke="#b09248" stroke-width="1.1" stroke-linecap="round"/>
<ellipse cx="279.8" cy="321.4" rx="0.9" ry="0.8" fill="#e0d090" />
<path d="M286.0,323.3 L286.4,315.3" stroke="#5e4618" stroke-width="2.1" stroke-linecap="round"/>
<path d="M285.7,323.3 L286.1,315.3" stroke="#b09248" stroke-width="1.1" stroke-linecap="round"/>
<ellipse cx="286.4" cy="315.3" rx="0.9" ry="0.8" fill="#e0d090" />
<path d="M288.5,328.8 L288.9,320.8" stroke="#5e4618" stroke-width="2.1" stroke-linecap="round"/>
<path d="M288.2,328.8 L288.6,320.8" stroke="#b09248" stroke-width="1.1" stroke-linecap="round"/>
<ellipse cx="288.9" cy="320.8" rx="0.9" ry="0.8" fill="#e0d090" />
<path d="M295.0,322.8 L295.5,314.8" stroke="#5e4618" stroke-width="2.1" stroke-linecap="round"/>
<path d="M294.7,322.8 L295.2,314.8" stroke="#b09248" stroke-width="1.1" stroke-linecap="round"/>
<ellipse cx="295.5" cy="314.8" rx="0.9" ry="0.8" fill="#e0d090" />
<path d="M297.5,328.3 L298.0,320.3" stroke="#5e4618" stroke-width="2.1" stroke-linecap="round"/>
<path d="M297.2,328.3 L297.7,320.3" stroke="#b09248" stroke-width="1.1" stroke-linecap="round"/>
<ellipse cx="298.0" cy="320.3" rx="0.9" ry="0.8" fill="#e0d090" />
<path d="M304.0,322.2 L304.6,314.2" stroke="#5e4618" stroke-width="2.1" stroke-linecap="round"/>
<path d="M303.7,322.2 L304.3,314.2" stroke="#b09248" stroke-width="1.1" stroke-linecap="round"/>
<ellipse cx="304.6" cy="314.2" rx="0.9" ry="0.8" fill="#e0d090" />
<path d="M306.5,327.7 L307.1,319.7" stroke="#5e4618" stroke-width="2.1" stroke-linecap="round"/>
<path d="M306.2,327.7 L306.8,319.7" stroke="#b09248" stroke-width="1.1" stroke-linecap="round"/>
<ellipse cx="307.1" cy="319.7" rx="0.9" ry="0.8" fill="#e0d090" />
<path d="M313.0,321.7 L313.7,313.7" stroke="#5e4618" stroke-width="2.1" stroke-linecap="round"/>
<path d="M312.7,321.7 L313.4,313.7" stroke="#b09248" stroke-width="1.1" stroke-linecap="round"/>
<ellipse cx="313.7" cy="313.7" rx="0.9" ry="0.8" fill="#e0d090" />
<path d="M315.5,327.2 L316.2,319.2" stroke="#5e4618" stroke-width="2.1" stroke-linecap="round"/>
<path d="M315.2,327.2 L315.9,319.2" stroke="#b09248" stroke-width="1.1" stroke-linecap="round"/>
<ellipse cx="316.2" cy="319.2" rx="0.9" ry="0.8" fill="#e0d090" />
<path d="M322.0,321.2 L322.8,313.2" stroke="#5e4618" stroke-width="2.1" stroke-linecap="round"/>
<path d="M321.7,321.2 L322.5,313.2" stroke="#b09248" stroke-width="1.1" stroke-linecap="round"/>
<ellipse cx="322.8" cy="313.2" rx="0.9" ry="0.8" fill="#e0d090" />
<path d="M324.5,326.7 L325.3,318.7" stroke="#5e4618" stroke-width="2.1" stroke-linecap="round"/>
<path d="M324.2,326.7 L325.0,318.7" stroke="#b09248" stroke-width="1.1" stroke-linecap="round"/>
<ellipse cx="325.3" cy="318.7" rx="0.9" ry="0.8" fill="#e0d090" />
<path d="M331.0,320.6 L331.9,312.6" stroke="#5e4618" stroke-width="2.1" stroke-linecap="round"/>
<path d="M330.7,320.6 L331.6,312.6" stroke="#b09248" stroke-width="1.1" stroke-linecap="round"/>
<ellipse cx="331.9" cy="312.6" rx="0.9" ry="0.8" fill="#e0d090" />
<path d="M333.5,326.1 L334.4,318.1" stroke="#5e4618" stroke-width="2.1" stroke-linecap="round"/>
<path d="M333.2,326.1 L334.1,318.1" stroke="#b09248" stroke-width="1.1" stroke-linecap="round"/>
<ellipse cx="334.4" cy="318.1" rx="0.9" ry="0.8" fill="#e0d090" />
<path d="M340.0,320.1 L340.9,312.1" stroke="#5e4618" stroke-width="2.1" stroke-linecap="round"/>
<path d="M339.7,320.1 L340.6,312.1" stroke="#b09248" stroke-width="1.1" stroke-linecap="round"/>
<ellipse cx="340.9" cy="312.1" rx="0.9" ry="0.8" fill="#e0d090" />
<path d="M342.5,325.6 L343.5,317.6" stroke="#5e4618" stroke-width="2.1" stroke-linecap="round"/>
<path d="M342.2,325.6 L343.2,317.6" stroke="#b09248" stroke-width="1.1" stroke-linecap="round"/>
<ellipse cx="343.5" cy="317.6" rx="0.9" ry="0.8" fill="#e0d090" />
<path d="M349.0,319.5 L350.0,311.5" stroke="#5e4618" stroke-width="2.1" stroke-linecap="round"/>
<path d="M348.7,319.5 L349.7,311.5" stroke="#b09248" stroke-width="1.1" stroke-linecap="round"/>
<ellipse cx="350.0" cy="311.5" rx="0.9" ry="0.8" fill="#e0d090" />
<path d="M351.5,325.0 L352.6,317.0" stroke="#5e4618" stroke-width="2.1" stroke-linecap="round"/>
<path d="M351.2,325.0 L352.3,317.0" stroke="#b09248" stroke-width="1.1" stroke-linecap="round"/>
<ellipse cx="352.6" cy="317.0" rx="0.9" ry="0.8" fill="#e0d090" />
<path d="M358.0,319.0 L359.1,311.0" stroke="#5e4618" stroke-width="2.1" stroke-linecap="round"/>
<path d="M357.7,319.0 L358.8,311.0" stroke="#b09248" stroke-width="1.1" stroke-linecap="round"/>
<ellipse cx="359.1" cy="311.0" rx="0.9" ry="0.8" fill="#e0d090" />
<path d="M360.5,324.5 L361.7,316.5" stroke="#5e4618" stroke-width="2.1" stroke-linecap="round"/>
<path d="M360.2,324.5 L361.4,316.5" stroke="#b09248" stroke-width="1.1" stroke-linecap="round"/>
<ellipse cx="361.7" cy="316.5" rx="0.9" ry="0.8" fill="#e0d090" />
<path d="M367.0,318.4 L368.2,310.4" stroke="#5e4618" stroke-width="2.1" stroke-linecap="round"/>
<path d="M366.7,318.4 L367.9,310.4" stroke="#b09248" stroke-width="1.1" stroke-linecap="round"/>
<ellipse cx="368.2" cy="310.4" rx="0.9" ry="0.8" fill="#e0d090" />
<path d="M369.5,323.9 L370.8,315.9" stroke="#5e4618" stroke-width="2.1" stroke-linecap="round"/>
<path d="M369.2,323.9 L370.5,315.9" stroke="#b09248" stroke-width="1.1" stroke-linecap="round"/>
<ellipse cx="370.8" cy="315.9" rx="0.9" ry="0.8" fill="#e0d090" />
<path d="M376.0,317.9 L377.3,309.9" stroke="#5e4618" stroke-width="2.1" stroke-linecap="round"/>
<path d="M375.7,317.9 L377.0,309.9" stroke="#b09248" stroke-width="1.1" stroke-linecap="round"/>
<ellipse cx="377.3" cy="309.9" rx="0.9" ry="0.8" fill="#e0d090" />
<path d="M378.5,323.4 L379.9,315.4" stroke="#5e4618" stroke-width="2.1" stroke-linecap="round"/>
<path d="M378.2,323.4 L379.6,315.4" stroke="#b09248" stroke-width="1.1" stroke-linecap="round"/>
<ellipse cx="379.9" cy="315.4" rx="0.9" ry="0.8" fill="#e0d090" />
<path d="M385.0,317.3 L386.4,309.3" stroke="#5e4618" stroke-width="2.1" stroke-linecap="round"/>
<path d="M384.7,317.3 L386.1,309.3" stroke="#b09248" stroke-width="1.1" stroke-linecap="round"/>
<ellipse cx="386.4" cy="309.3" rx="0.9" ry="0.8" fill="#e0d090" />
<path d="M387.5,322.8 L388.9,314.8" stroke="#5e4618" stroke-width="2.1" stroke-linecap="round"/>
<path d="M387.2,322.8 L388.6,314.8" stroke="#b09248" stroke-width="1.1" stroke-linecap="round"/>
<ellipse cx="388.9" cy="314.8" rx="0.9" ry="0.8" fill="#e0d090" />
<path d="M394.0,316.8 L395.5,308.8" stroke="#5e4618" stroke-width="2.1" stroke-linecap="round"/>
<path d="M393.7,316.8 L395.2,308.8" stroke="#b09248" stroke-width="1.1" stroke-linecap="round"/>
<ellipse cx="395.5" cy="308.8" rx="0.9" ry="0.8" fill="#e0d090" />
<path d="M396.5,322.3 L398.0,314.3" stroke="#5e4618" stroke-width="2.1" stroke-linecap="round"/>
<path d="M396.2,322.3 L397.7,314.3" stroke="#b09248" stroke-width="1.1" stroke-linecap="round"/>
<ellipse cx="398.0" cy="314.3" rx="0.9" ry="0.8" fill="#e0d090" />
<path d="M403.0,316.3 L404.6,308.3" stroke="#5e4618" stroke-width="2.1" stroke-linecap="round"/>
<path d="M402.7,316.3 L404.3,308.3" stroke="#b09248" stroke-width="1.1" stroke-linecap="round"/>
<ellipse cx="404.6" cy="308.3" rx="0.9" ry="0.8" fill="#e0d090" />
<path d="M405.5,321.8 L407.1,313.8" stroke="#5e4618" stroke-width="2.1" stroke-linecap="round"/>
<path d="M405.2,321.8 L406.8,313.8" stroke="#b09248" stroke-width="1.1" stroke-linecap="round"/>
<ellipse cx="407.1" cy="313.8" rx="0.9" ry="0.8" fill="#e0d090" />
<polygon points="466.4,189.4 476.0,186.5 516.0,310.0 500.5,311.0" fill="#262626" />
<polygon points="466.4,189.4 469.5,188.5 503.5,310.8 500.5,311.0" fill="#0e0e0e" />
<path d="M471.2,190.6 L477.7,182.6" stroke="#5e4618" stroke-width="2.3" stroke-linecap="round"/>
<path d="M470.9,190.3 L477.4,182.3" stroke="#a08240" stroke-width="1.1" stroke-linecap="round"/>
<ellipse cx="477.7" cy="182.6" rx="0.9" ry="0.9" fill="#d8c888" />
<path d="M477.2,190.0 L483.7,182.0" stroke="#5e4618" stroke-width="2.3" stroke-linecap="round"/>
<path d="M476.9,189.7 L483.4,181.7" stroke="#a08240" stroke-width="1.1" stroke-linecap="round"/>
<ellipse cx="483.7" cy="182.0" rx="0.9" ry="0.9" fill="#d8c888" />
<path d="M472.9,196.3 L479.4,188.3" stroke="#5e4618" stroke-width="2.3" stroke-linecap="round"/>
<path d="M472.6,196.0 L479.1,188.0" stroke="#a08240" stroke-width="1.1" stroke-linecap="round"/>
<ellipse cx="479.4" cy="188.3" rx="0.9" ry="0.9" fill="#d8c888" />
<path d="M478.9,195.8 L485.4,187.8" stroke="#5e4618" stroke-width="2.3" stroke-linecap="round"/>
<path d="M478.6,195.4 L485.1,187.4" stroke="#a08240" stroke-width="1.1" stroke-linecap="round"/>
<ellipse cx="485.4" cy="187.8" rx="0.9" ry="0.9" fill="#d8c888" />
<path d="M474.7,202.1 L481.2,194.1" stroke="#5e4618" stroke-width="2.3" stroke-linecap="round"/>
<path d="M474.4,201.8 L480.9,193.8" stroke="#a08240" stroke-width="1.1" stroke-linecap="round"/>
<ellipse cx="481.2" cy="194.1" rx="0.9" ry="0.9" fill="#d8c888" />
<path d="M480.7,201.5 L487.2,193.5" stroke="#5e4618" stroke-width="2.3" stroke-linecap="round"/>
<path d="M480.4,201.2 L486.9,193.2" stroke="#a08240" stroke-width="1.1" stroke-linecap="round"/>
<ellipse cx="487.2" cy="193.5" rx="0.9" ry="0.9" fill="#d8c888" />
<path d="M476.4,207.8 L482.9,199.8" stroke="#5e4618" stroke-width="2.3" stroke-linecap="round"/>
<path d="M476.1,207.5 L482.6,199.5" stroke="#a08240" stroke-width="1.1" stroke-linecap="round"/>
<ellipse cx="482.9" cy="199.8" rx="0.9" ry="0.9" fill="#d8c888" />
<path d="M482.4,207.2 L488.9,199.2" stroke="#5e4618" stroke-width="2.3" stroke-linecap="round"/>
<path d="M482.1,206.9 L488.6,198.9" stroke="#a08240" stroke-width="1.1" stroke-linecap="round"/>
<ellipse cx="488.9" cy="199.2" rx="0.9" ry="0.9" fill="#d8c888" />
<path d="M478.2,213.6 L484.7,205.6" stroke="#5e4618" stroke-width="2.3" stroke-linecap="round"/>
<path d="M477.9,213.3 L484.4,205.3" stroke="#a08240" stroke-width="1.1" stroke-linecap="round"/>
<ellipse cx="484.7" cy="205.6" rx="0.9" ry="0.9" fill="#d8c888" />
<path d="M484.2,213.0 L490.7,205.0" stroke="#5e4618" stroke-width="2.3" stroke-linecap="round"/>
<path d="M483.9,212.7 L490.4,204.7" stroke="#a08240" stroke-width="1.1" stroke-linecap="round"/>
<ellipse cx="490.7" cy="205.0" rx="0.9" ry="0.9" fill="#d8c888" />
<path d="M479.9,219.3 L486.4,211.3" stroke="#5e4618" stroke-width="2.3" stroke-linecap="round"/>
<path d="M479.6,219.0 L486.1,211.0" stroke="#a08240" stroke-width="1.1" stroke-linecap="round"/>
<ellipse cx="486.4" cy="211.3" rx="0.9" ry="0.9" fill="#d8c888" />
<path d="M485.9,218.8 L492.4,210.8" stroke="#5e4618" stroke-width="2.3" stroke-linecap="round"/>
<path d="M485.6,218.4 L492.1,210.4" stroke="#a08240" stroke-width="1.1" stroke-linecap="round"/>
<ellipse cx="492.4" cy="210.8" rx="0.9" ry="0.9" fill="#d8c888" />
<path d="M481.7,225.1 L488.2,217.1" stroke="#5e4618" stroke-width="2.3" stroke-linecap="round"/>
<path d="M481.4,224.8 L487.9,216.8" stroke="#a08240" stroke-width="1.1" stroke-linecap="round"/>
<ellipse cx="488.2" cy="217.1" rx="0.9" ry="0.9" fill="#d8c888" />
<path d="M487.7,224.5 L494.2,216.5" stroke="#5e4618" stroke-width="2.3" stroke-linecap="round"/>
<path d="M487.4,224.2 L493.9,216.2" stroke="#a08240" stroke-width="1.1" stroke-linecap="round"/>
<ellipse cx="494.2" cy="216.5" rx="0.9" ry="0.9" fill="#d8c888" />
<path d="M483.4,230.8 L489.9,222.8" stroke="#5e4618" stroke-width="2.3" stroke-linecap="round"/>
<path d="M483.1,230.5 L489.6,222.5" stroke="#a08240" stroke-width="1.1" stroke-linecap="round"/>
<ellipse cx="489.9" cy="222.8" rx="0.9" ry="0.9" fill="#d8c888" />
<path d="M489.4,230.2 L495.9,222.2" stroke="#5e4618" stroke-width="2.3" stroke-linecap="round"/>
<path d="M489.1,229.9 L495.6,221.9" stroke="#a08240" stroke-width="1.1" stroke-linecap="round"/>
<ellipse cx="495.9" cy="222.2" rx="0.9" ry="0.9" fill="#d8c888" />
<path d="M485.2,236.6 L491.7,228.6" stroke="#5e4618" stroke-width="2.3" stroke-linecap="round"/>
<path d="M484.9,236.3 L491.4,228.3" stroke="#a08240" stroke-width="1.1" stroke-linecap="round"/>
<ellipse cx="491.7" cy="228.6" rx="0.9" ry="0.9" fill="#d8c888" />
<path d="M491.2,236.0 L497.7,228.0" stroke="#5e4618" stroke-width="2.3" stroke-linecap="round"/>
<path d="M490.9,235.7 L497.4,227.7" stroke="#a08240" stroke-width="1.1" stroke-linecap="round"/>
<ellipse cx="497.7" cy="228.0" rx="0.9" ry="0.9" fill="#d8c888" />
<path d="M486.9,242.3 L493.4,234.3" stroke="#5e4618" stroke-width="2.3" stroke-linecap="round"/>
<path d="M486.6,242.0 L493.1,234.0" stroke="#a08240" stroke-width="1.1" stroke-linecap="round"/>
<ellipse cx="493.4" cy="234.3" rx="0.9" ry="0.9" fill="#d8c888" />
<path d="M492.9,241.8 L499.4,233.8" stroke="#5e4618" stroke-width="2.3" stroke-linecap="round"/>
<path d="M492.6,241.4 L499.1,233.4" stroke="#a08240" stroke-width="1.1" stroke-linecap="round"/>
<ellipse cx="499.4" cy="233.8" rx="0.9" ry="0.9" fill="#d8c888" />
<path d="M488.7,248.1 L495.2,240.1" stroke="#5e4618" stroke-width="2.3" stroke-linecap="round"/>
<path d="M488.4,247.8 L494.9,239.8" stroke="#a08240" stroke-width="1.1" stroke-linecap="round"/>
<ellipse cx="495.2" cy="240.1" rx="0.9" ry="0.9" fill="#d8c888" />
<path d="M494.7,247.5 L501.2,239.5" stroke="#5e4618" stroke-width="2.3" stroke-linecap="round"/>
<path d="M494.4,247.2 L500.9,239.2" stroke="#a08240" stroke-width="1.1" stroke-linecap="round"/>
<ellipse cx="501.2" cy="239.5" rx="0.9" ry="0.9" fill="#d8c888" />
<path d="M490.4,253.8 L496.9,245.8" stroke="#5e4618" stroke-width="2.3" stroke-linecap="round"/>
<path d="M490.1,253.5 L496.6,245.5" stroke="#a08240" stroke-width="1.1" stroke-linecap="round"/>
<ellipse cx="496.9" cy="245.8" rx="0.9" ry="0.9" fill="#d8c888" />
<path d="M496.4,253.2 L502.9,245.2" stroke="#5e4618" stroke-width="2.3" stroke-linecap="round"/>
<path d="M496.1,252.9 L502.6,244.9" stroke="#a08240" stroke-width="1.1" stroke-linecap="round"/>
<ellipse cx="502.9" cy="245.2" rx="0.9" ry="0.9" fill="#d8c888" />
<path d="M492.2,259.6 L498.7,251.6" stroke="#5e4618" stroke-width="2.3" stroke-linecap="round"/>
<path d="M491.9,259.3 L498.4,251.3" stroke="#a08240" stroke-width="1.1" stroke-linecap="round"/>
<ellipse cx="498.7" cy="251.6" rx="0.9" ry="0.9" fill="#d8c888" />
<path d="M498.2,259.0 L504.7,251.0" stroke="#5e4618" stroke-width="2.3" stroke-linecap="round"/>
<path d="M497.9,258.7 L504.4,250.7" stroke="#a08240" stroke-width="1.1" stroke-linecap="round"/>
<ellipse cx="504.7" cy="251.0" rx="0.9" ry="0.9" fill="#d8c888" />
<path d="M493.9,265.4 L500.4,257.4" stroke="#5e4618" stroke-width="2.3" stroke-linecap="round"/>
<path d="M493.6,265.1 L500.1,257.1" stroke="#a08240" stroke-width="1.1" stroke-linecap="round"/>
<ellipse cx="500.4" cy="257.4" rx="0.9" ry="0.9" fill="#d8c888" />
<path d="M499.9,264.8 L506.4,256.8" stroke="#5e4618" stroke-width="2.3" stroke-linecap="round"/>
<path d="M499.6,264.4 L506.1,256.4" stroke="#a08240" stroke-width="1.1" stroke-linecap="round"/>
<ellipse cx="506.4" cy="256.8" rx="0.9" ry="0.9" fill="#d8c888" />
<path d="M495.7,271.1 L502.2,263.1" stroke="#5e4618" stroke-width="2.3" stroke-linecap="round"/>
<path d="M495.4,270.8 L501.9,262.8" stroke="#a08240" stroke-width="1.1" stroke-linecap="round"/>
<ellipse cx="502.2" cy="263.1" rx="0.9" ry="0.9" fill="#d8c888" />
<path d="M501.7,270.5 L508.2,262.5" stroke="#5e4618" stroke-width="2.3" stroke-linecap="round"/>
<path d="M501.4,270.2 L507.9,262.2" stroke="#a08240" stroke-width="1.1" stroke-linecap="round"/>
<ellipse cx="508.2" cy="262.5" rx="0.9" ry="0.9" fill="#d8c888" />
<path d="M497.4,276.9 L503.9,268.9" stroke="#5e4618" stroke-width="2.3" stroke-linecap="round"/>
<path d="M497.1,276.6 L503.6,268.6" stroke="#a08240" stroke-width="1.1" stroke-linecap="round"/>
<ellipse cx="503.9" cy="268.9" rx="0.9" ry="0.9" fill="#d8c888" />
<path d="M503.4,276.2 L509.9,268.2" stroke="#5e4618" stroke-width="2.3" stroke-linecap="round"/>
<path d="M503.1,275.9 L509.6,267.9" stroke="#a08240" stroke-width="1.1" stroke-linecap="round"/>
<ellipse cx="509.9" cy="268.2" rx="0.9" ry="0.9" fill="#d8c888" />
<path d="M499.2,282.6 L505.7,274.6" stroke="#5e4618" stroke-width="2.3" stroke-linecap="round"/>
<path d="M498.9,282.3 L505.4,274.3" stroke="#a08240" stroke-width="1.1" stroke-linecap="round"/>
<ellipse cx="505.7" cy="274.6" rx="0.9" ry="0.9" fill="#d8c888" />
<path d="M505.2,282.0 L511.7,274.0" stroke="#5e4618" stroke-width="2.3" stroke-linecap="round"/>
<path d="M504.9,281.7 L511.4,273.7" stroke="#a08240" stroke-width="1.1" stroke-linecap="round"/>
<ellipse cx="511.7" cy="274.0" rx="0.9" ry="0.9" fill="#d8c888" />
<path d="M500.9,288.4 L507.4,280.4" stroke="#5e4618" stroke-width="2.3" stroke-linecap="round"/>
<path d="M500.6,288.1 L507.1,280.1" stroke="#a08240" stroke-width="1.1" stroke-linecap="round"/>
<ellipse cx="507.4" cy="280.4" rx="0.9" ry="0.9" fill="#d8c888" />
<path d="M507.0,287.8 L513.5,279.8" stroke="#5e4618" stroke-width="2.3" stroke-linecap="round"/>
<path d="M506.7,287.4 L513.2,279.4" stroke="#a08240" stroke-width="1.1" stroke-linecap="round"/>
<ellipse cx="513.5" cy="279.8" rx="0.9" ry="0.9" fill="#d8c888" />
<path d="M502.7,294.1 L509.2,286.1" stroke="#5e4618" stroke-width="2.3" stroke-linecap="round"/>
<path d="M502.4,293.8 L508.9,285.8" stroke="#a08240" stroke-width="1.1" stroke-linecap="round"/>
<ellipse cx="509.2" cy="286.1" rx="0.9" ry="0.9" fill="#d8c888" />
<path d="M508.7,293.5 L515.2,285.5" stroke="#5e4618" stroke-width="2.3" stroke-linecap="round"/>
<path d="M508.4,293.2 L514.9,285.2" stroke="#a08240" stroke-width="1.1" stroke-linecap="round"/>
<ellipse cx="515.2" cy="285.5" rx="0.9" ry="0.9" fill="#d8c888" />
<path d="M504.4,299.9 L510.9,291.9" stroke="#5e4618" stroke-width="2.3" stroke-linecap="round"/>
<path d="M504.1,299.6 L510.6,291.6" stroke="#a08240" stroke-width="1.1" stroke-linecap="round"/>
<ellipse cx="510.9" cy="291.9" rx="0.9" ry="0.9" fill="#d8c888" />
<path d="M510.5,299.2 L517.0,291.2" stroke="#5e4618" stroke-width="2.3" stroke-linecap="round"/>
<path d="M510.2,298.9 L516.7,290.9" stroke="#a08240" stroke-width="1.1" stroke-linecap="round"/>
<ellipse cx="517.0" cy="291.2" rx="0.9" ry="0.9" fill="#d8c888" />
<path d="M506.2,305.6 L512.7,297.6" stroke="#5e4618" stroke-width="2.3" stroke-linecap="round"/>
<path d="M505.9,305.3 L512.4,297.3" stroke="#a08240" stroke-width="1.1" stroke-linecap="round"/>
<ellipse cx="512.7" cy="297.6" rx="0.9" ry="0.9" fill="#d8c888" />
<path d="M512.2,305.0 L518.7,297.0" stroke="#5e4618" stroke-width="2.3" stroke-linecap="round"/>
<path d="M511.9,304.7 L518.4,296.7" stroke="#a08240" stroke-width="1.1" stroke-linecap="round"/>
<ellipse cx="518.7" cy="297.0" rx="0.9" ry="0.9" fill="#d8c888" />
<path d="M508.0,311.4 L514.5,303.4" stroke="#5e4618" stroke-width="2.3" stroke-linecap="round"/>
<path d="M507.7,311.1 L514.2,303.1" stroke="#a08240" stroke-width="1.1" stroke-linecap="round"/>
<ellipse cx="514.5" cy="303.4" rx="0.9" ry="0.9" fill="#d8c888" />
<path d="M514.0,310.8 L520.5,302.8" stroke="#5e4618" stroke-width="2.3" stroke-linecap="round"/>
<path d="M513.7,310.4 L520.2,302.4" stroke="#a08240" stroke-width="1.1" stroke-linecap="round"/>
<ellipse cx="520.5" cy="302.8" rx="0.9" ry="0.9" fill="#d8c888" />
<polygon points="453.0,139.5 460.0,137.3 472.5,163.3 459.5,167.6" fill="#101010" />
<path d="M457.0,142.0 L464.0,136.0" stroke="#b89848" stroke-width="1.2" stroke-linecap="round"/>
<path d="M462.0,140.0 L469.0,134.0" stroke="#b89848" stroke-width="1.2" stroke-linecap="round"/>
<path d="M458.6,146.2 L465.6,140.2" stroke="#b89848" stroke-width="1.2" stroke-linecap="round"/>
<path d="M463.6,144.2 L470.6,138.2" stroke="#b89848" stroke-width="1.2" stroke-linecap="round"/>
<path d="M460.2,150.4 L467.2,144.4" stroke="#b89848" stroke-width="1.2" stroke-linecap="round"/>
<path d="M465.2,148.4 L472.2,142.4" stroke="#b89848" stroke-width="1.2" stroke-linecap="round"/>
<path d="M461.8,154.6 L468.8,148.6" stroke="#b89848" stroke-width="1.2" stroke-linecap="round"/>
<path d="M466.8,152.6 L473.8,146.6" stroke="#b89848" stroke-width="1.2" stroke-linecap="round"/>
<path d="M463.4,158.8 L470.4,152.8" stroke="#b89848" stroke-width="1.2" stroke-linecap="round"/>
<path d="M468.4,156.8 L475.4,150.8" stroke="#b89848" stroke-width="1.2" stroke-linecap="round"/>
<path d="M465.0,163.0 L472.0,157.0" stroke="#b89848" stroke-width="1.2" stroke-linecap="round"/>
<path d="M470.0,161.0 L477.0,155.0" stroke="#b89848" stroke-width="1.2" stroke-linecap="round"/>
<path d="M460,304 L470,302 M486,300.5 L492,300" stroke="#c0a860" stroke-width="1"/>
<ellipse cx="460.0" cy="304.0" rx="2.0" ry="1.6" fill="none" stroke="#d8b030" stroke-width="0.9"/>
<ellipse cx="492.0" cy="300.0" rx="2.0" ry="1.6" fill="none" stroke="#d8b030" stroke-width="0.9"/>
<rect x="468.0" y="298.5" width="19.0" height="6.0" fill="#dcc490" rx="2.5"/>
<rect x="468.0" y="301.5" width="19.0" height="3.0" fill="#b89e68" rx="1.5"/>
<path d="M383,199 Q382,207 389,207 H394 Q399,207 398.5,199" stroke="#d8d0e0" stroke-width="0.4" fill="none" opacity="0.8"/>
<rect x="386.0" y="198.0" width="3.0" height="3.0" fill="#d8b838" />
<rect x="393.0" y="198.0" width="3.0" height="3.0" fill="#d8b838" />
<rect x="384.0" y="188.0" width="14.0" height="10.0" fill="#222222" />
<ellipse cx="391.0" cy="198.0" rx="7.0" ry="2.2" fill="#222222" />
<ellipse cx="391.0" cy="188.0" rx="7.0" ry="3.6" fill="#2e2e2e" />
<rect x="384.0" y="188.0" width="3.0" height="10.0" fill="#2a2a2a" />
<polygon points="49.0,372.0 53.0,367.5 57.0,370.0 55.0,375.0" fill="#10c010" />
<ellipse cx="55.0" cy="376.5" rx="5.2" ry="6.0" fill="#1010e0" transform="rotate(-30 55 376.5)"/>
<ellipse cx="54.0" cy="382.5" rx="3.0" ry="2.0" fill="#0a0a80" />
<polygon points="55.0,379.5 64.0,380.0 64.0,384.0 55.0,385.0" fill="#f01010" />
<polygon points="64.0,377.8 72.5,382.0 64.0,386.2" fill="#ff1010" />
</g>
<g id="toolbar">
<!-- separators -->
<g fill="#cfcfcf">
<rect x="52.6" y="39.5" width="0.8" height="11"/>
<rect x="75.3" y="39.5" width="0.8" height="11"/>
<rect x="97.2" y="39.5" width="0.8" height="11"/>
<rect x="172.6" y="39.5" width="0.8" height="11"/>
<rect x="212.3" y="39.5" width="0.8" height="11"/>
<rect x="252.3" y="39.5" width="0.8" height="11"/>
<rect x="292.5" y="39.5" width="0.8" height="11"/>
<rect x="314.5" y="39.5" width="0.8" height="11"/>
<rect x="389.2" y="39.5" width="0.8" height="11"/>
<rect x="412.3" y="39.5" width="0.8" height="11"/>
</g>
<!-- icon1 export -->
<rect x="35.2" y="39.2" width="9" height="6.2" rx="0.8" fill="#363636"/>
<rect x="35.2" y="42.2" width="9" height="0.4" fill="#555"/>
<rect x="35.2" y="45.6" width="8" height="2" fill="#8a8a8a"/>
<rect x="35.2" y="49.2" width="7" height="1.6" fill="#3b82d0"/>
<circle cx="44.9" cy="48.2" r="3.8" fill="#c8283c" stroke="#ececec" stroke-width="0.6"/>
<path d="M44.9,45.6 V49.9 M43.1,48.1 L44.9,49.9 L46.7,48.1" stroke="#fff" stroke-width="1.1" fill="none"/>
<!-- icon2 copy -->
<path d="M58,40 H63.5 L66,42.5 V49.5 H58 Z" fill="#f8f8f8" stroke="#5a5a5a" stroke-width="0.7"/>
<path d="M61.5,41.5 H67 L69.5,44 V51 H61.5 Z" fill="#f8f8f8" stroke="#5a5a5a" stroke-width="0.7"/>
<path d="M63,46.5 H66 M63,48 H67" stroke="#999" stroke-width="0.5"/>
<!-- icon3 cube -->
<path d="M86.3,39.3 L92.8,42.5 V48.5 L86.3,51.5 L79.8,48.5 V42.5 Z" fill="#9a9a9a" stroke="#555" stroke-width="0.5"/>
<path d="M79.8,42.5 L86.3,45.5 L92.8,42.5 L86.3,39.3 Z" fill="#d8d8d8"/>
<path d="M86.3,45.5 L92.8,42.5 V48.5 L86.3,51.5 Z" fill="#bcbcbc"/>
<path d="M86.4,39.3 V51.5" stroke="#3b82d0" stroke-width="1"/>
<!-- icon4 refresh -->
<path d="M103.5,44.2 A5.3,5.3 0 0 1 113,41.5 M114,46.3 A5.3,5.3 0 0 1 104.5,49" stroke="#3a3a3a" stroke-width="1.3" fill="none"/>
<path d="M114.3,39.2 V43.3 H110.2 Z M103.2,51.3 V47.2 H107.3 Z" fill="#3a3a3a"/>
<!-- zoom in/out/fit -->
<g stroke="#3a3a3a" fill="none" stroke-width="1.2">
<circle cx="125.5" cy="44.8" r="4.2"/><path d="M128.5,47.8 L131.8,51.2 M123.2,44.8 H127.8 M125.5,42.5 V47.1"/>
<circle cx="142.8" cy="44.8" r="4.2"/><path d="M145.8,47.8 L149.1,51.2 M140.5,44.8 H145.1"/>
<circle cx="160.5" cy="44.8" r="4.2"/><path d="M163.5,47.8 L166.8,51.2"/>
</g>
<rect x="158.5" y="42.8" width="4" height="4" fill="#9a9a9a"/>
<!-- flip icons x -->
<g stroke="#333" fill="none" stroke-width="0.9">
<path d="M184,38.8 V45.6 M179,51 L187.5,43"/>
<path d="M201.3,38.8 V45.6 M196.3,51 L204.8,43"/>
</g>
<path d="M178.4,39.8 l2.2,2.6 M180.6,39.8 l-2.2,2.6" stroke="#333" stroke-width="0.6" fill="none"/>
<path d="M195.7,39.8 l2.2,2.6 M197.89999999999998,39.8 l-2.2,2.6" stroke="#333" stroke-width="0.6" fill="none"/>
<path d="M187.6,44.5 A1.8,2.8 0 1 0 188.4,50 M185.5,47 H190.3" stroke="#555" stroke-width="0.7" fill="none"/>
<path d="M186.5,47 H190.3" stroke="#e03040" stroke-width="1"/>
<path d="M205,44.5 A1.8,2.8 0 1 0 205.8,50 H207.5 V47.5 H205.5" stroke="#555" stroke-width="0.7" fill="none"/>
<path d="M204.5,47.2 H207.8" stroke="#e03040" stroke-width="1"/>
<!-- flip y -->
<g stroke="#333" fill="none" stroke-width="0.9">
<path d="M223.9,38.8 V46.2 H229.4"/>
<path d="M241.1,38.8 V46.2 H246.6"/>
</g>
<path d="M225.8,39.6 l1.3,1.6 l1.3,-1.6 M227.10000000000002,41.2 v1.6" stroke="#333" stroke-width="0.6" fill="none"/>
<path d="M243,39.6 l1.3,1.6 l1.3,-1.6 M244.3,41.2 v1.6" stroke="#333" stroke-width="0.6" fill="none"/>
<path d="M220,46.5 A2.6,2.6 0 1 0 223.5,50.5 M237.2,46.5 A2.6,2.6 0 1 0 240.7,50.5" stroke="#555" stroke-width="0.8" fill="none"/>
<path d="M218.6,51 L222.2,47.8 M235.8,51 L239.4,47.8" stroke="#e03040" stroke-width="1.2"/>
<!-- rotate z -->
<g stroke="#333" fill="none" stroke-width="0.9">
<path d="M259,51 L268.4,43.4"/>
<path d="M276.3,51 L285.7,43.4"/>
</g>
<path d="M263.8,37.9 V45.3 M281.1,37.9 V45.3" stroke="#e03040" stroke-width="1"/>
<path d="M260,43.5 A4,1.7 0 1 0 268,43.5 M277.3,43.5 A4,1.7 0 1 0 285.3,43.5" stroke="#555" stroke-width="0.7" fill="none"/>
<path d="M263.8,48.5 h2.2 l-2.2,2.6 h2.2" stroke="#333" stroke-width="0.55" fill="none"/>
<path d="M281.1,48.5 h2.2 l-2.2,2.6 h2.2" stroke="#333" stroke-width="0.55" fill="none"/>
<!-- book icon -->
<path d="M303,40.5 L309.5,39.5 V50.5 L303,51.5 Z" fill="#3b82d0"/>
<path d="M298.5,40.5 H303 M298.5,51 H303 M298.5,40.5 V42 M298.5,49.5 V51 M299,44.5 V47" stroke="#777" stroke-width="0.6" fill="none"/>
<!-- arrows -->
<g fill="#3a7ccc">
<path d="M319.7,44.8 L326.2,39.3 V42.9 H331.8 V46.7 H326.2 V50.3 Z"/>
<path d="M349.9,44.8 L343.4,39.3 V42.9 H337.8 V46.7 H343.4 V50.3 Z"/>
<path d="M360.7,39.3 L366.2,45.4 H362.6 V51 H358.8 V45.4 H355.2 Z"/>
<path d="M378.4,51 L372.9,44.9 H376.5 V39.3 H380.3 V44.9 H383.9 Z"/>
</g>
<!-- grey cube -->
<path d="M401,39.3 L407,42.3 V48.5 L401,51.5 L395,48.5 V42.3 Z" fill="#8a8a8a" stroke="#5a5a5a" stroke-width="0.6"/>
<path d="M395,42.3 L401,45.3 L407,42.3 L401,39.3 Z" fill="#c8c8c8"/>
<path d="M401,45.3 L407,42.3 V48.5 L401,51.5 Z" fill="#a8a8a8"/>
<!-- selected layers -->
<rect x="414.6" y="37.2" width="18.4" height="16.2" rx="2.5" fill="#dfe5ec"/>
<path d="M418,46.5 L423.3,43.5 L428.6,46.5 V48 L423.3,51 L418,48 Z" fill="#f0a030"/>
<path d="M418,44.8 L423.3,39.6 L428.6,44.8 L423.3,50 Z" fill="#2a68b0"/>
</g>

<circle cx="38" cy="28.3" r="3.5" fill="#ee5f57"/>
<circle cx="49" cy="28.3" r="3.5" fill="#f5bd4f"/>
<circle cx="60" cy="28.3" r="3.5" fill="#60c454"/>
<text x="349.7" y="30.6" font-size="7.5" font-weight="bold" fill="#4b4b4b" text-anchor="middle">3D Viewer</text>
<text x="567.3" y="61.3" style="font-size:6.25px;fill:#3a3a3a;stroke:#3a3a3a;stroke-width:0.3px">Appearance</text>
<rect x="568" y="67.3" width="9" height="7" fill="#000000"/>
<use href="#eye" x="584" y="70.8"/>
<text x="591.2" y="73.2" class="pt">Board Body</text>
<rect x="568" y="77.1" width="9" height="7" fill="#b8a03a"/>
<use href="#eye" x="584" y="80.6"/>
<text x="591.2" y="83.0" class="pt">F.Cu</text>
<rect x="568" y="87.0" width="9" height="7" fill="#b8a03a"/>
<use href="#eye" x="584" y="90.5"/>
<text x="591.2" y="92.9" class="pt">B.Cu</text>
<use href="#eye" x="584" y="100.3"/>
<text x="591.2" y="102.8" class="pt">Adhesive</text>
<rect x="568" y="106.7" width="9" height="7" fill="#808080"/>
<use href="#eye" x="584" y="110.2"/>
<text x="591.2" y="112.6" class="pt">Solder Paste</text>
<rect x="568" y="116.5" width="9" height="7" fill="#f4f4f4"/>
<use href="#eye" x="584" y="120.0"/>
<text x="591.2" y="122.5" class="pt">F.Silkscreen</text>
<rect x="568" y="126.4" width="9" height="7" fill="#f4f4f4"/>
<use href="#eye" x="584" y="129.9"/>
<text x="591.2" y="132.3" class="pt">B.Silkscreen</text>
<rect x="568" y="136.2" width="9" height="7" fill="#7d4f9e"/>
<use href="#eye" x="584" y="139.8"/>
<text x="591.2" y="142.2" class="pt">F.Mask</text>
<rect x="568" y="146.1" width="9" height="7" fill="#3a5044"/>
<use href="#eye" x="584" y="149.6"/>
<text x="591.2" y="152.0" class="pt">B.Mask</text>
<rect x="568" y="155.9" width="9" height="7" fill="#c6c6c6"/>
<use href="#eye" x="584" y="159.4"/>
<text x="591.2" y="161.8" class="pt">User.Drawings</text>
<rect x="568" y="165.8" width="9" height="7" fill="#5b8fdc"/>
<use href="#eye" x="584" y="169.3"/>
<text x="591.2" y="171.7" class="pt">User.Comments</text>
<rect x="568" y="175.6" width="9" height="7" fill="#bde0d6"/>
<use href="#off" x="584" y="179.1"/>
<text x="591.2" y="181.5" class="pt">User.Eco1</text>
<rect x="568" y="185.5" width="9" height="7" fill="#d6c55e"/>
<use href="#off" x="584" y="189.0"/>
<text x="591.2" y="191.4" class="pt">User.Eco2</text>
<use href="#eye" x="584" y="204.9"/>
<text x="591.2" y="207.3" class="pt">Through-hole Models</text>
<use href="#eye" x="584" y="214.7"/>
<text x="591.2" y="217.1" class="pt">SMD Models</text>
<use href="#eye" x="584" y="224.5"/>
<text x="591.2" y="226.9" class="pt">Virtual Models</text>
<use href="#eye" x="584" y="234.3"/>
<text x="591.2" y="236.7" class="pt">Models not in POS File</text>
<use href="#eye" x="584" y="244.1"/>
<text x="591.2" y="246.5" class="pt">Models marked DNP</text>
<use href="#off" x="584" y="253.9"/>
<text x="591.2" y="256.3" class="pt">Model Bounding Boxes</text>
<use href="#eye" x="584" y="270.0"/>
<text x="591.2" y="272.4" class="pt">Values</text>
<use href="#eye" x="584" y="279.8"/>
<text x="591.2" y="282.2" class="pt">References</text>
<use href="#eye" x="584" y="289.6"/>
<text x="591.2" y="292.0" class="pt">Footprint Text</text>
<use href="#off" x="584" y="299.4"/>
<text x="591.2" y="301.8" class="pt">Off-board Silkscreen</text>
<use href="#eye" x="584" y="315.3"/>
<text x="591.2" y="317.7" class="pt">3D Axis</text>
<rect x="568" y="321.5" width="9" height="7" fill="#d2d2ea"/>
<text x="591.2" y="327.4" class="pt">Background Start</text>
<rect x="568" y="331.0" width="9" height="7" fill="#5e5e78"/>
<text x="591.2" y="336.9" class="pt">Background End</text>
<text x="569.5" y="366.5" class="pl">Presets (Ctrl+Tab):</text>
<rect x="569.5" y="369.8" width="95.5" height="9.4" rx="2.2" fill="#fff" stroke="#d8d8d8" stroke-width="0.5"/>
<path d="M573.5,374.5 H654" stroke="#dadada" stroke-width="0.5"/>
<rect x="656" y="370.5" width="8.5" height="8" rx="2" fill="#2f7cf6"/>
<path d="M658.6,373.6 L660.25,372 L661.9,373.6 M658.6,375.9 L660.25,377.5 L661.9,375.9" stroke="#fff" stroke-width="0.8" fill="none"/>
<text x="569.5" y="389" class="pl">Viewports (Option+Tab):</text>
<rect x="569.5" y="392.3" width="95.5" height="9.4" rx="2.2" fill="#fff" stroke="#d8d8d8" stroke-width="0.5"/>
<path d="M573.5,397 H654" stroke="#dadada" stroke-width="0.5"/>
<rect x="656" y="393" width="8.5" height="8" rx="2" fill="#2f7cf6"/>
<path d="M658.6,396.1 L660.25,394.5 L661.9,396.1 M658.6,398.4 L660.25,400 L661.9,398.4" stroke="#fff" stroke-width="0.8" fill="none"/>
<text x="33.8" y="416.3" class="st">Reload time 0.231 s</text>
<text x="469.7" y="416.3" class="st" text-anchor="middle">dx 0.00</text>
<text x="540.6" y="416.3" class="st" text-anchor="middle">dy 0.00</text>
<text x="615" y="416.3" class="st" text-anchor="middle">zoom 1.21</text>
</svg>
</body></html>
